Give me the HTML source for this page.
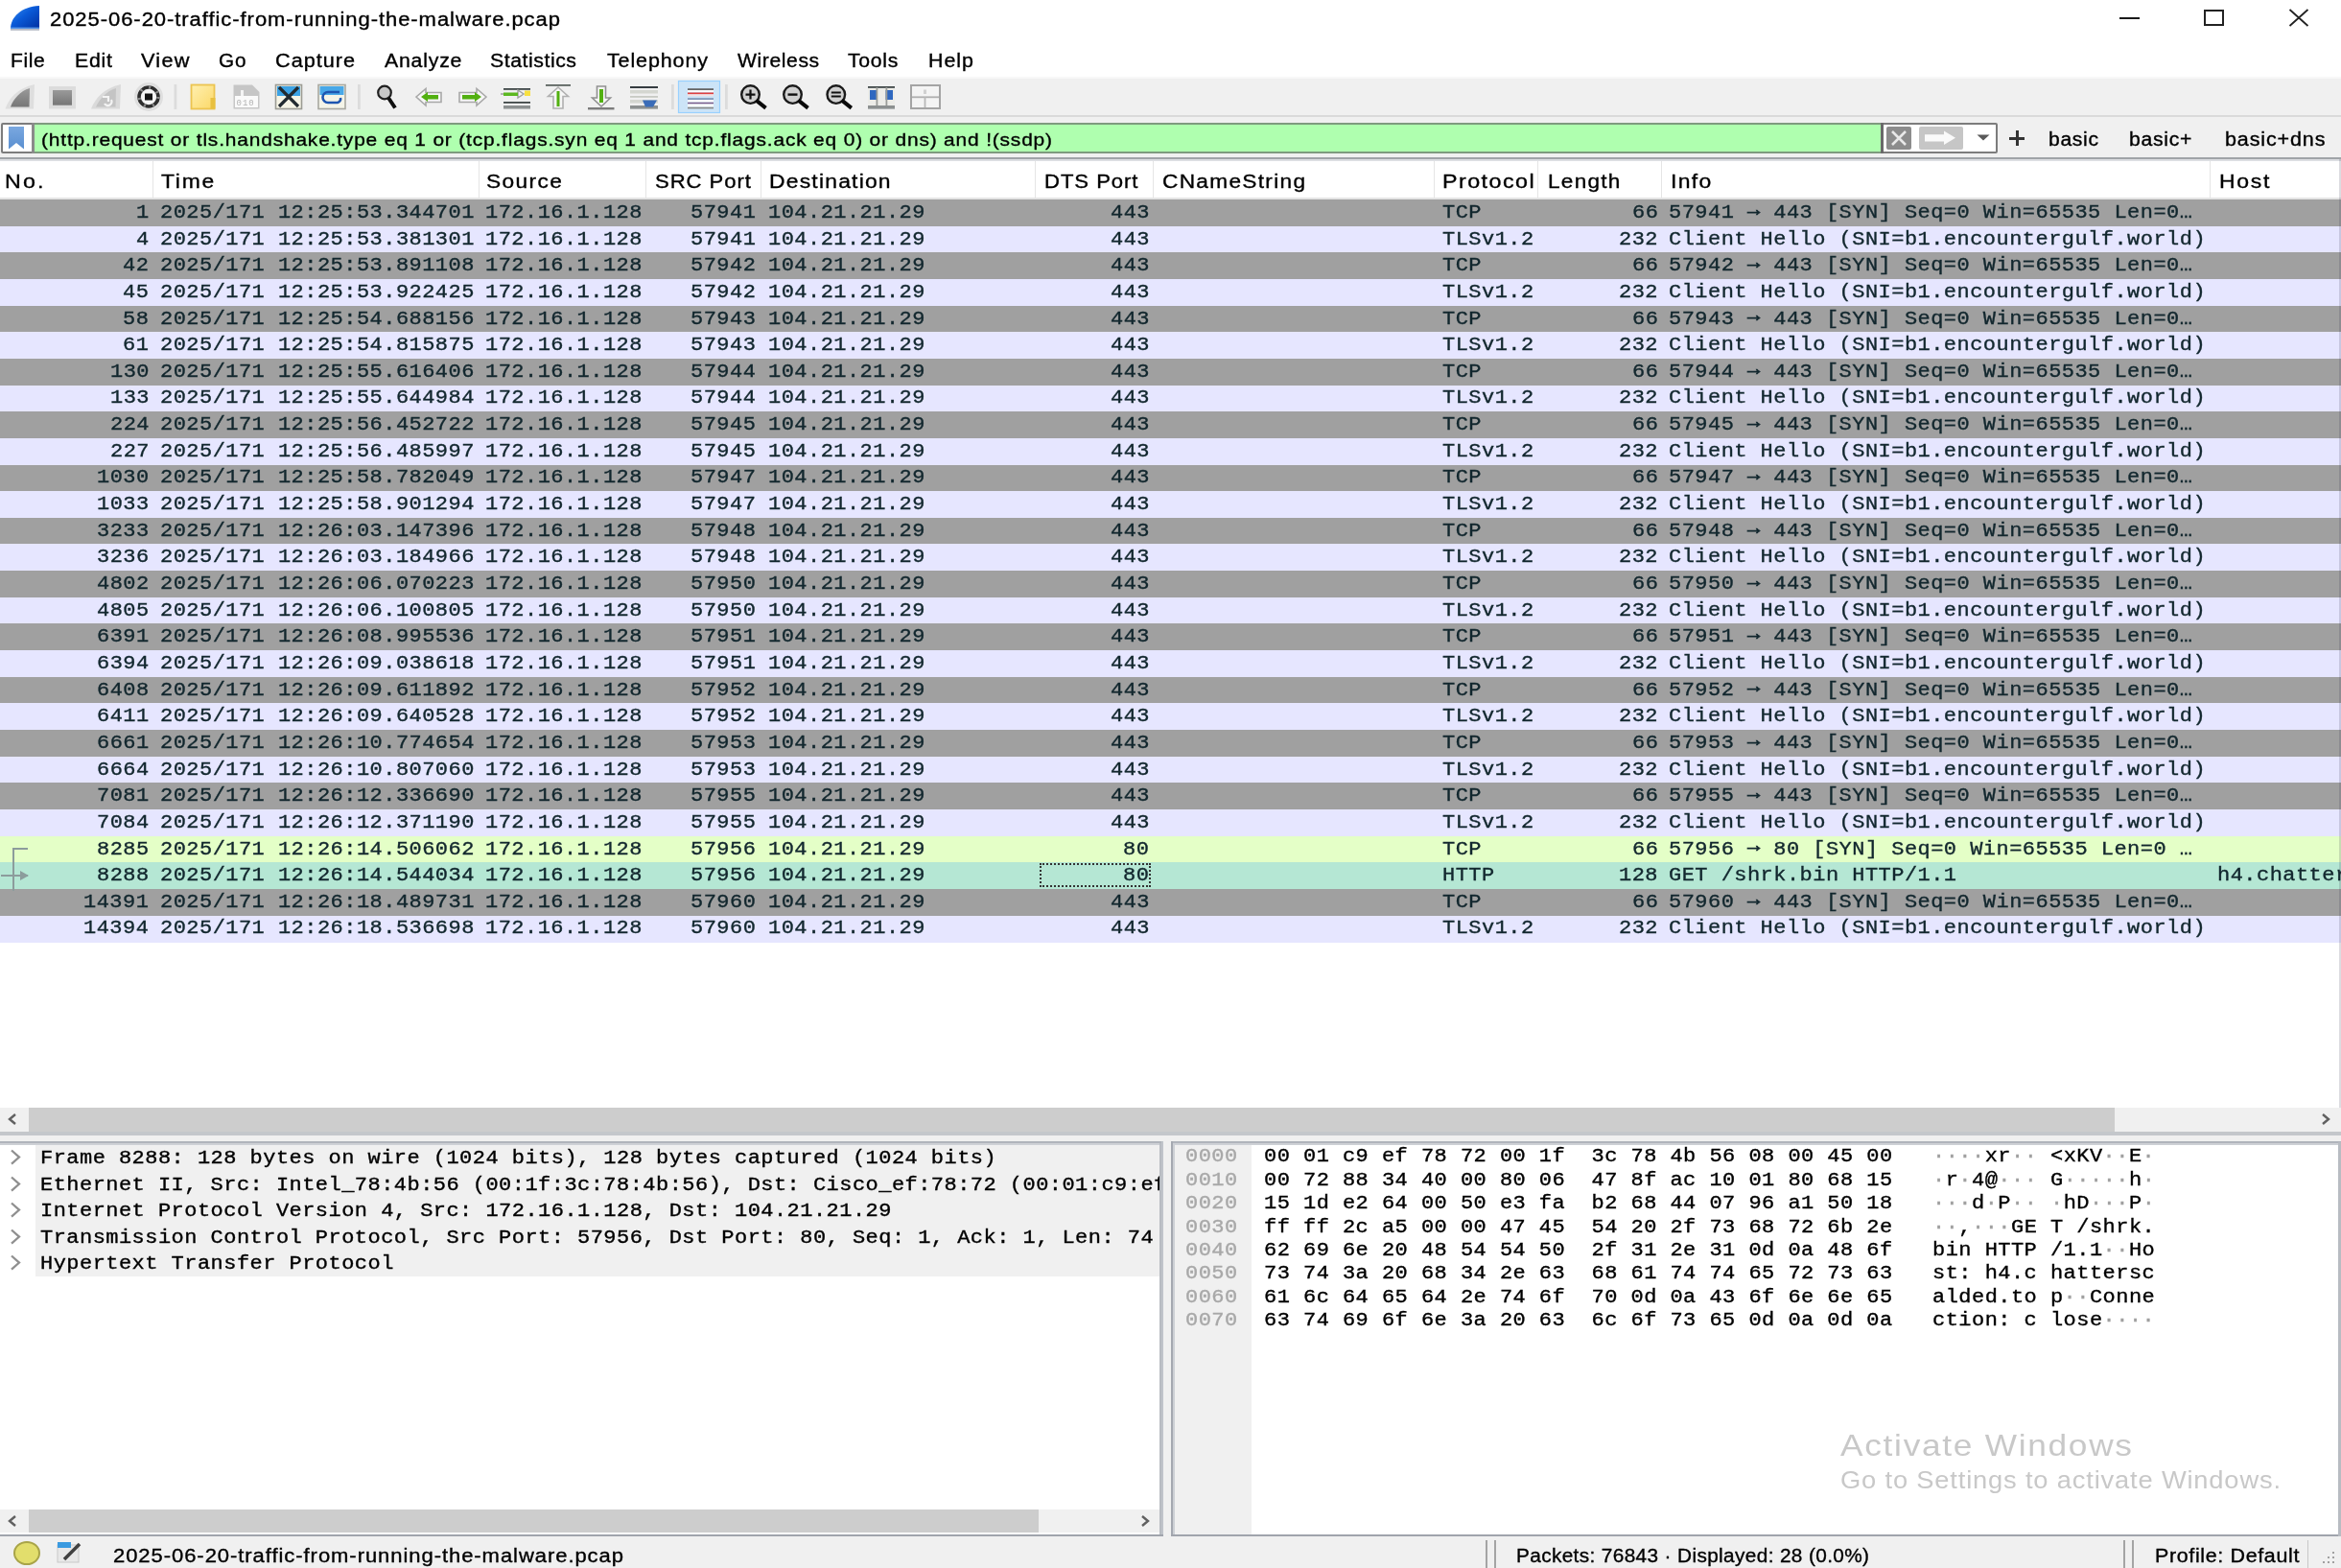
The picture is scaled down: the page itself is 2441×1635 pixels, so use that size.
<!DOCTYPE html>
<html><head><meta charset="utf-8"><title>Wireshark</title>
<style>
html,body{margin:0;padding:0;width:2441px;height:1635px;overflow:hidden;background:#fff;position:relative}
body{filter:blur(0.5px)}
body *{position:absolute;box-sizing:border-box}
svg *{position:static}
.t{white-space:pre;line-height:1;-webkit-text-stroke:0.35px currentColor}
</style></head><body>
<div style="left:0.00px;top:0.00px;width:2441.00px;height:79.00px;background:#ffffff;"></div>
<svg style="left:10.00px;top:4.00px" width="34" height="30" viewBox="0 0 34 30"><defs><linearGradient id="fin" x1="0" y1="0" x2="1" y2="1"><stop offset="0" stop-color="#3a90f0"/><stop offset="0.45" stop-color="#0a5ad8"/><stop offset="1" stop-color="#0030a0"/></linearGradient></defs><path d="M1 26 C1 14 12 3 31 2 L31 26 Z" fill="url(#fin)"/><rect x="1" y="24.5" width="30" height="2" fill="#6aa8f0" opacity="0.8"/><rect x="1" y="26" width="30" height="1.8" fill="#b4b8c4"/></svg>
<div class="t" style="left:52.00px;top:9.50px;font-family:'Liberation Sans';font-size:20px;letter-spacing:0.859px;color:#000;transform:scaleX(1.1002);transform-origin:0 0;">2025-06-20-traffic-from-running-the-malware.pcap</div>
<div style="left:2209.50px;top:18.00px;width:21.00px;height:2.00px;background:#1a1a1a;"></div>
<div style="left:2297.5px;top:10px;width:21px;height:17px;border:2px solid #222"></div>
<svg style="left:2386.00px;top:9.00px" width="22" height="19" viewBox="0 0 22 19"><path d="M1.5 1 L20.5 18 M20.5 1 L1.5 18" stroke="#222" stroke-width="1.8"/></svg>
<div class="t" style="left:11.40px;top:53.00px;font-family:'Liberation Sans';font-size:20px;letter-spacing:0.533px;color:#000;transform:scaleX(1.0522);transform-origin:0 0;">File</div>
<div class="t" style="left:78.00px;top:53.00px;font-family:'Liberation Sans';font-size:20px;letter-spacing:0.694px;color:#000;transform:scaleX(1.0643);transform-origin:0 0;">Edit</div>
<div class="t" style="left:146.60px;top:53.00px;font-family:'Liberation Sans';font-size:20px;letter-spacing:1.136px;color:#000;transform:scaleX(1.0860);transform-origin:0 0;">View</div>
<div class="t" style="left:228.00px;top:53.00px;font-family:'Liberation Sans';font-size:20px;letter-spacing:0.923px;color:#000;transform:scaleX(1.0358);transform-origin:0 0;">Go</div>
<div class="t" style="left:287.00px;top:53.00px;font-family:'Liberation Sans';font-size:20px;letter-spacing:0.911px;color:#000;transform:scaleX(1.0832);transform-origin:0 0;">Capture</div>
<div class="t" style="left:400.80px;top:53.00px;font-family:'Liberation Sans';font-size:20px;letter-spacing:0.723px;color:#000;transform:scaleX(1.0650);transform-origin:0 0;">Analyze</div>
<div class="t" style="left:511.20px;top:53.00px;font-family:'Liberation Sans';font-size:20px;letter-spacing:0.521px;color:#000;transform:scaleX(1.0623);transform-origin:0 0;">Statistics</div>
<div class="t" style="left:633.20px;top:53.00px;font-family:'Liberation Sans';font-size:20px;letter-spacing:0.803px;color:#000;transform:scaleX(1.0757);transform-origin:0 0;">Telephony</div>
<div class="t" style="left:768.80px;top:53.00px;font-family:'Liberation Sans';font-size:20px;letter-spacing:0.571px;color:#000;transform:scaleX(1.0550);transform-origin:0 0;">Wireless</div>
<div class="t" style="left:884.20px;top:53.00px;font-family:'Liberation Sans';font-size:20px;letter-spacing:0.671px;color:#000;transform:scaleX(1.0610);transform-origin:0 0;">Tools</div>
<div class="t" style="left:968.20px;top:53.00px;font-family:'Liberation Sans';font-size:20px;letter-spacing:0.912px;color:#000;transform:scaleX(1.0712);transform-origin:0 0;">Help</div>
<div style="left:0.00px;top:80.00px;width:2441.00px;height:2.00px;background:#f8f8f8;"></div>
<div style="left:0.00px;top:82.00px;width:2441.00px;height:38.00px;background:#f0f0f0;"></div>
<div style="left:0.00px;top:120.00px;width:2441.00px;height:2.00px;background:#dadada;"></div>
<svg style="left:0;top:80px" width="1000" height="42" viewBox="0 80 1000 42"><defs><linearGradient id="g1" x1="0" y1="0" x2="0" y2="1"><stop offset="0" stop-color="#9a9a9a"/><stop offset="1" stop-color="#767676"/></linearGradient><linearGradient id="gy" x1="0" y1="0" x2="1" y2="1"><stop offset="0" stop-color="#fff0b0"/><stop offset="1" stop-color="#fbd868"/></linearGradient></defs><path d="M5.5 113.5 C9 103 18 92 36 88 L35 113.5 Z" fill="#dedede"/><path d="M11 111.5 C14 103 21 95 31 92 L30.5 111.5 Z" fill="url(#g1)"/><rect x="51" y="90" width="28" height="23.5" fill="#dcdcdc"/><rect x="55" y="94" width="20" height="15.7" fill="url(#g1)"/><path d="M95 113.5 C99 103 108 92 126 88 L125 113.5 Z" fill="#dadada"/><path d="M100 111.5 C104 103 111 95 121 92 L120.5 111.5 Z" fill="#c4c4c4"/><path d="M107 101 h6 v5 M116 104 a4 4 0 1 1 -7 4" stroke="#f4f4f4" stroke-width="2.2" fill="none"/><circle cx="155" cy="101" r="15" fill="#dedede"/><circle cx="155" cy="101" r="12.2" fill="#f2f2f2"/><circle cx="155" cy="101" r="10" fill="none" stroke="#2e2e2e" stroke-width="3.6"/><circle cx="155" cy="101" r="10" fill="none" stroke="#8a8a8a" stroke-width="3.6" stroke-dasharray="2 7.4"/><circle cx="155" cy="101" r="6.8" fill="#f6f6f6"/><rect x="151" y="97.5" width="8" height="7" fill="#141414"/><rect x="181.5" y="88" width="2.8" height="26" fill="#dcdcdc"/><rect x="373" y="88" width="2.8" height="26" fill="#dcdcdc"/><rect x="700" y="88" width="2.8" height="26" fill="#dcdcdc"/><rect x="756" y="88" width="2.8" height="26" fill="#dcdcdc"/><rect x="199.5" y="88.5" width="24" height="25" fill="url(#gy)" stroke="#ecc450" stroke-width="1.8"/><rect x="219.5" y="102" width="5" height="11.5" fill="#e8c040"/><path d="M243.5 88.5 H263 L270.5 96 V113.5 H243.5 Z" fill="#c6c6c6"/><rect x="245" y="100" width="24" height="12" fill="#fafafa"/><rect x="251" y="94" width="3" height="6" fill="#f4f4f4"/><text x="246.5" y="110" font-family="Liberation Mono" font-size="9" fill="#b4b4b4" letter-spacing="1">010</text><rect x="287.5" y="88.5" width="27" height="25" fill="#f6f4e6" stroke="#9c9c94" stroke-width="1.6"/><rect x="289" y="90" width="24" height="10" fill="#3ca2e4"/><path d="M291 91 L311 111 M311 91 L291 111" stroke="#222a30" stroke-width="3.2"/><rect x="332" y="88.5" width="28" height="25" fill="#f4f4e8" stroke="#a8a8a0" stroke-width="1.6"/><rect x="333.5" y="90" width="25" height="9" fill="#48a8e8"/><path d="M354 96 H342 a5 5 0 0 0 0 11 H352 a4 4 0 0 0 3 -5" stroke="#1e56b0" stroke-width="2.6" fill="none"/><circle cx="401" cy="96.5" r="6.8" fill="#c8c8c8" stroke="#202020" stroke-width="2.2"/><path d="M405 102 L412 112.5" stroke="#101010" stroke-width="4"/><path d="M434 101 L444 92.5 V96.5 H460 V106.5 H444 V110 Z" fill="#f6f6f6" stroke="#a8a8a8" stroke-width="1.6"/><path d="M439 101 L446 96 V99 H457 V103.5 H446 V106 Z" fill="#52b010"/><path d="M507 101 L497 92.5 V96.5 H479 V106.5 H497 V110 Z" fill="#f6f6f6" stroke="#a8a8a8" stroke-width="1.6"/><path d="M502 101 L495 96 V99 H482 V103.5 H495 V106 Z" fill="#52b010"/><rect x="525" y="92" width="28" height="1.8" fill="#404848"/><path d="M522 98 H540 V94 L546 98 L540 102 V98" fill="#f4f4f4" stroke="#a0a0a0" stroke-width="1.4"/><rect x="525" y="96.5" width="15" height="3.5" fill="#5cb820"/><rect x="547" y="94.5" width="6" height="5.5" fill="#f8e040"/><rect x="525" y="106" width="28" height="1.8" fill="#404848"/><rect x="525" y="110" width="28" height="3.5" fill="#8c9090"/><rect x="569" y="88" width="26" height="1.8" fill="#5c6460"/><path d="M582 91 L592.5 100.5 H587 V113 H577 V100.5 H571.5 Z" fill="#f6f6f6" stroke="#b0b0b0" stroke-width="1.6"/><rect x="580.5" y="95" width="3" height="16" fill="#52b010"/><path d="M622.5 90 H631.5 V102 H636.5 L627 111 L617.5 102 H622.5 Z" fill="#f6f6f6" stroke="#909090" stroke-width="1.6"/><rect x="625" y="93" width="4" height="14" fill="#52b010"/><rect x="613" y="112" width="27.5" height="2.4" fill="#7c7c7c"/><rect x="657" y="90" width="29" height="2" fill="#353c40"/><rect x="657" y="94" width="29" height="3.5" fill="#d4d6d0"/><rect x="657" y="100" width="29" height="1.8" fill="#c8cac4"/><rect x="657" y="104" width="29" height="3.5" fill="#d4d6d0"/><rect x="657" y="110" width="29" height="3.6" fill="#8c9090"/><path d="M670 104.5 H685 L681 111.5 H673 Z" fill="#3a6cb8"/><rect x="707.5" y="84.5" width="43" height="33" fill="#cce4f7" stroke="#99d1ff" stroke-width="1.2"/><rect x="717" y="92.2" width="27" height="1.8" fill="#666"/><rect x="717" y="96.5" width="27" height="1.8" fill="#e04040"/><rect x="717" y="102.2" width="27" height="1.8" fill="#8098b8"/><rect x="717" y="106.6" width="27" height="1.8" fill="#7a5a8a"/><rect x="717" y="111.6" width="27" height="1.8" fill="#8a8a8a"/><rect x="717" y="94" width="27" height="2" fill="#fafafa"/><rect x="717" y="98.4" width="27" height="1.8" fill="#f8e0e0"/><rect x="717" y="104" width="27" height="2.4" fill="#fafafa"/><rect x="717" y="108.5" width="27" height="2.8" fill="#fafafa"/><circle cx="782.5" cy="98.6" r="9.3" fill="#d0d0d0" stroke="#1a1a1a" stroke-width="2.4"/><path d="M788.5 104.6 L798.5 112.6" stroke="#0a0a0a" stroke-width="4"/><path d="M777.5 98.6 H787.5 M782.5 93.6 V103.6" stroke="#101010" stroke-width="2.2"/><circle cx="826.5" cy="98.6" r="9.3" fill="#d0d0d0" stroke="#1a1a1a" stroke-width="2.4"/><path d="M832.5 104.6 L842.5 112.6" stroke="#0a0a0a" stroke-width="4"/><path d="M821.5 98.6 H831.5" stroke="#101010" stroke-width="2.4"/><circle cx="871.8" cy="98.6" r="9.3" fill="#d0d0d0" stroke="#1a1a1a" stroke-width="2.4"/><path d="M877.8 104.6 L887.8 112.6" stroke="#0a0a0a" stroke-width="4"/><path d="M866.8 96.6 H876.8 M866.8 100.6 H876.8" stroke="#101010" stroke-width="2"/><rect x="905" y="90" width="28" height="1.8" fill="#404848"/><rect x="905" y="92" width="28" height="18" fill="#ecece8"/><rect x="907" y="94" width="7.5" height="10" fill="#2f68c0"/><rect x="923.5" y="94" width="7.5" height="10" fill="#2f68c0"/><rect x="913.5" y="91" width="1.8" height="21" fill="#9a9c98"/><rect x="923.5" y="91" width="1.8" height="21" fill="#9a9c98"/><rect x="905" y="110" width="28" height="3.6" fill="#8c9090"/><rect x="950" y="89" width="30" height="24" fill="#f4f4f4" stroke="#a4a4a4" stroke-width="2"/><rect x="951" y="100.4" width="28" height="1.8" fill="#b0b0b0"/><rect x="963.6" y="101" width="1.8" height="11" fill="#b8b8b8"/><rect x="963" y="93.5" width="3" height="4.5" fill="#d0d0d0"/></svg>
<div style="left:0.00px;top:122.00px;width:2441.00px;height:42.00px;background:#f0f0f0;"></div>
<div style="left:0.00px;top:164.00px;width:2441.00px;height:2.00px;background:#a0a4a8;"></div>
<div style="left:1px;top:128px;width:2082px;height:31.7px;border:2px solid #7c7c7c;border-radius:2px;background:#fff"></div>
<div style="left:35.00px;top:130.00px;width:1926.00px;height:28.00px;background:#afffaf;"></div>
<div style="left:33.00px;top:128.00px;width:3.00px;height:32.00px;background:#8a8a8a;"></div>
<svg style="left:8.00px;top:131.00px" width="18" height="26" viewBox="0 0 18 26"><defs><linearGradient id="bm" x1="0" y1="0" x2="0" y2="1"><stop offset="0" stop-color="#7aa8e0"/><stop offset="1" stop-color="#5a8fd0"/></linearGradient></defs><path d="M1 1 H17 V24.5 L9 18 L1 24.5 Z" fill="url(#bm)"/></svg>
<div style="left:36.00px;top:128.00px;width:1925.00px;height:2.00px;background:#7e9a7e;"></div>
<div style="left:36.00px;top:157.70px;width:1925.00px;height:2.00px;background:#7e9a7e;"></div>
<div style="left:1961.00px;top:128.00px;width:2.50px;height:32.00px;background:#6a6a6a;"></div>
<div class="t" style="left:43.00px;top:136.25px;font-family:'Liberation Sans';font-size:19px;letter-spacing:0.756px;color:#000;transform:scaleX(1.1005);transform-origin:0 0;">(http.request or tls.handshake.type eq 1 or (tcp.flags.syn eq 1 and tcp.flags.ack eq 0) or dns) and !(ssdp)</div>
<div style="left:1967px;top:132px;width:26px;height:23.5px;background:#8c8c8c;border-radius:2px"></div>
<svg style="left:1967.00px;top:132.00px" width="26" height="24" viewBox="0 0 26 24"><path d="M6 5 L20 19 M20 5 L6 19" stroke="#e8e8e8" stroke-width="2.6"/></svg>
<div style="left:2001px;top:132px;width:45.6px;height:23.5px;background:#c6c6c6;border-radius:2px"></div>
<svg style="left:2001.00px;top:132.00px" width="46" height="24" viewBox="0 0 46 24"><path d="M6 8.2 H26 V4.5 L38 11.8 L26 19 V15.4 H6 Z" fill="#fafafa"/></svg>
<svg style="left:2060.00px;top:139.00px" width="16" height="10" viewBox="0 0 16 10"><path d="M1.5 1.5 H14.5 L8 7.5 Z" fill="#5a5a5a"/></svg>
<div style="left:2095.00px;top:142.50px;width:16.00px;height:3.00px;background:#333;"></div>
<div style="left:2101.50px;top:136.00px;width:3.00px;height:16.00px;background:#333;"></div>
<div class="t" style="left:2136.00px;top:134.50px;font-family:'Liberation Sans';font-size:20px;letter-spacing:0.627px;color:#000;transform:scaleX(1.0567);transform-origin:0 0;">basic</div>
<div class="t" style="left:2220.00px;top:134.50px;font-family:'Liberation Sans';font-size:20px;letter-spacing:0.672px;color:#000;transform:scaleX(1.0610);transform-origin:0 0;">basic+</div>
<div class="t" style="left:2319.60px;top:134.50px;font-family:'Liberation Sans';font-size:20px;letter-spacing:0.800px;color:#000;transform:scaleX(1.0760);transform-origin:0 0;">basic+dns</div>
<div style="left:0.00px;top:166.00px;width:2441.00px;height:41.00px;background:#ffffff;"></div>
<div style="left:0.00px;top:166.00px;width:2441.00px;height:2.00px;background:#dcdee2;"></div>
<div style="left:0.00px;top:206.00px;width:2441.00px;height:2.00px;background:#e4e4e4;"></div>
<div style="left:159.20px;top:168.00px;width:1.20px;height:38.00px;background:#e5e5e5;"></div>
<div style="left:498.50px;top:168.00px;width:1.20px;height:38.00px;background:#e5e5e5;"></div>
<div style="left:673.10px;top:168.00px;width:1.20px;height:38.00px;background:#e5e5e5;"></div>
<div style="left:793.00px;top:168.00px;width:1.20px;height:38.00px;background:#e5e5e5;"></div>
<div style="left:1079.20px;top:168.00px;width:1.20px;height:38.00px;background:#e5e5e5;"></div>
<div style="left:1202.10px;top:168.00px;width:1.20px;height:38.00px;background:#e5e5e5;"></div>
<div style="left:1495.00px;top:168.00px;width:1.20px;height:38.00px;background:#e5e5e5;"></div>
<div style="left:1602.50px;top:168.00px;width:1.20px;height:38.00px;background:#e5e5e5;"></div>
<div style="left:1731.50px;top:168.00px;width:1.20px;height:38.00px;background:#e5e5e5;"></div>
<div style="left:2303.90px;top:168.00px;width:1.20px;height:38.00px;background:#e5e5e5;"></div>
<div class="t" style="left:5.40px;top:178.57px;font-family:'Liberation Sans';font-size:20.5px;letter-spacing:1.893px;color:#000;transform:scaleX(1.1347);transform-origin:0 0;">No.</div>
<div class="t" style="left:168.00px;top:178.57px;font-family:'Liberation Sans';font-size:20.5px;letter-spacing:1.553px;color:#000;transform:scaleX(1.1161);transform-origin:0 0;">Time</div>
<div class="t" style="left:506.60px;top:178.57px;font-family:'Liberation Sans';font-size:20.5px;letter-spacing:1.266px;color:#000;transform:scaleX(1.1080);transform-origin:0 0;">Source</div>
<div class="t" style="left:682.90px;top:178.57px;font-family:'Liberation Sans';font-size:20.5px;letter-spacing:0.890px;color:#000;transform:scaleX(1.0775);transform-origin:0 0;">SRC Port</div>
<div class="t" style="left:801.60px;top:178.57px;font-family:'Liberation Sans';font-size:20.5px;letter-spacing:1.076px;color:#000;transform:scaleX(1.1172);transform-origin:0 0;">Destination</div>
<div class="t" style="left:1089.00px;top:178.57px;font-family:'Liberation Sans';font-size:20.5px;letter-spacing:0.875px;color:#000;transform:scaleX(1.0783);transform-origin:0 0;">DTS Port</div>
<div class="t" style="left:1212.20px;top:178.57px;font-family:'Liberation Sans';font-size:20.5px;letter-spacing:1.174px;color:#000;transform:scaleX(1.1055);transform-origin:0 0;">CNameString</div>
<div class="t" style="left:1503.70px;top:178.57px;font-family:'Liberation Sans';font-size:20.5px;letter-spacing:1.282px;color:#000;transform:scaleX(1.1355);transform-origin:0 0;">Protocol</div>
<div class="t" style="left:1613.90px;top:178.57px;font-family:'Liberation Sans';font-size:20.5px;letter-spacing:1.153px;color:#000;transform:scaleX(1.1012);transform-origin:0 0;">Length</div>
<div class="t" style="left:1741.60px;top:178.57px;font-family:'Liberation Sans';font-size:20.5px;letter-spacing:1.207px;color:#000;transform:scaleX(1.1184);transform-origin:0 0;">Info</div>
<div class="t" style="left:2313.50px;top:178.57px;font-family:'Liberation Sans';font-size:20.5px;letter-spacing:1.536px;color:#000;transform:scaleX(1.1227);transform-origin:0 0;">Host</div>
<div style="left:0.00px;top:208.00px;width:2441.00px;height:28.05px;background:#a0a0a0;"></div>
<div class="t" style="left:141.84px;top:211.90px;font-family:'Liberation Mono';font-size:20.0px;letter-spacing:0.416px;color:#12272e;transform:scaleX(1.1);transform-origin:0 0;">1</div>
<div class="t" style="left:167.00px;top:211.90px;font-family:'Liberation Mono';font-size:20.0px;letter-spacing:0.416px;color:#12272e;transform:scaleX(1.1);transform-origin:0 0;">2025/171 12:25:53.344701</div>
<div class="t" style="left:505.50px;top:211.90px;font-family:'Liberation Mono';font-size:20.0px;letter-spacing:0.416px;color:#12272e;transform:scaleX(1.1);transform-origin:0 0;">172.16.1.128</div>
<div class="t" style="left:719.70px;top:211.90px;font-family:'Liberation Mono';font-size:20.0px;letter-spacing:0.416px;color:#12272e;transform:scaleX(1.1);transform-origin:0 0;">57941</div>
<div class="t" style="left:800.50px;top:211.90px;font-family:'Liberation Mono';font-size:20.0px;letter-spacing:0.416px;color:#12272e;transform:scaleX(1.1);transform-origin:0 0;">104.21.21.29</div>
<div class="t" style="left:1157.52px;top:211.90px;font-family:'Liberation Mono';font-size:20.0px;letter-spacing:0.416px;color:#12272e;transform:scaleX(1.1);transform-origin:0 0;">443</div>
<div class="t" style="left:1503.50px;top:211.90px;font-family:'Liberation Mono';font-size:20.0px;letter-spacing:0.416px;color:#12272e;transform:scaleX(1.1);transform-origin:0 0;">TCP</div>
<div class="t" style="left:1701.68px;top:211.90px;font-family:'Liberation Mono';font-size:20.0px;letter-spacing:0.416px;color:#12272e;transform:scaleX(1.1);transform-origin:0 0;">66</div>
<div class="t" style="left:1739.50px;top:211.90px;font-family:'Liberation Mono';font-size:20.0px;letter-spacing:0.416px;color:#12272e;transform:scaleX(1.1);transform-origin:0 0;">57941 <span style="position:relative;top:-2.2px;-webkit-text-stroke:0.8px currentColor">→</span> 443 [SYN] Seq=0 Win=65535 Len=0…</div>
<div style="left:0.00px;top:235.65px;width:2441.00px;height:28.05px;background:#e6e6ff;"></div>
<div class="t" style="left:141.84px;top:239.55px;font-family:'Liberation Mono';font-size:20.0px;letter-spacing:0.416px;color:#12272e;transform:scaleX(1.1);transform-origin:0 0;">4</div>
<div class="t" style="left:167.00px;top:239.55px;font-family:'Liberation Mono';font-size:20.0px;letter-spacing:0.416px;color:#12272e;transform:scaleX(1.1);transform-origin:0 0;">2025/171 12:25:53.381301</div>
<div class="t" style="left:505.50px;top:239.55px;font-family:'Liberation Mono';font-size:20.0px;letter-spacing:0.416px;color:#12272e;transform:scaleX(1.1);transform-origin:0 0;">172.16.1.128</div>
<div class="t" style="left:719.70px;top:239.55px;font-family:'Liberation Mono';font-size:20.0px;letter-spacing:0.416px;color:#12272e;transform:scaleX(1.1);transform-origin:0 0;">57941</div>
<div class="t" style="left:800.50px;top:239.55px;font-family:'Liberation Mono';font-size:20.0px;letter-spacing:0.416px;color:#12272e;transform:scaleX(1.1);transform-origin:0 0;">104.21.21.29</div>
<div class="t" style="left:1157.52px;top:239.55px;font-family:'Liberation Mono';font-size:20.0px;letter-spacing:0.416px;color:#12272e;transform:scaleX(1.1);transform-origin:0 0;">443</div>
<div class="t" style="left:1503.50px;top:239.55px;font-family:'Liberation Mono';font-size:20.0px;letter-spacing:0.416px;color:#12272e;transform:scaleX(1.1);transform-origin:0 0;">TLSv1.2</div>
<div class="t" style="left:1688.02px;top:239.55px;font-family:'Liberation Mono';font-size:20.0px;letter-spacing:0.416px;color:#12272e;transform:scaleX(1.1);transform-origin:0 0;">232</div>
<div class="t" style="left:1739.50px;top:239.55px;font-family:'Liberation Mono';font-size:20.0px;letter-spacing:0.416px;color:#12272e;transform:scaleX(1.1);transform-origin:0 0;">Client Hello (SNI=b1.encountergulf.world)</div>
<div style="left:0.00px;top:263.30px;width:2441.00px;height:28.05px;background:#a0a0a0;"></div>
<div class="t" style="left:128.18px;top:267.20px;font-family:'Liberation Mono';font-size:20.0px;letter-spacing:0.416px;color:#12272e;transform:scaleX(1.1);transform-origin:0 0;">42</div>
<div class="t" style="left:167.00px;top:267.20px;font-family:'Liberation Mono';font-size:20.0px;letter-spacing:0.416px;color:#12272e;transform:scaleX(1.1);transform-origin:0 0;">2025/171 12:25:53.891108</div>
<div class="t" style="left:505.50px;top:267.20px;font-family:'Liberation Mono';font-size:20.0px;letter-spacing:0.416px;color:#12272e;transform:scaleX(1.1);transform-origin:0 0;">172.16.1.128</div>
<div class="t" style="left:719.70px;top:267.20px;font-family:'Liberation Mono';font-size:20.0px;letter-spacing:0.416px;color:#12272e;transform:scaleX(1.1);transform-origin:0 0;">57942</div>
<div class="t" style="left:800.50px;top:267.20px;font-family:'Liberation Mono';font-size:20.0px;letter-spacing:0.416px;color:#12272e;transform:scaleX(1.1);transform-origin:0 0;">104.21.21.29</div>
<div class="t" style="left:1157.52px;top:267.20px;font-family:'Liberation Mono';font-size:20.0px;letter-spacing:0.416px;color:#12272e;transform:scaleX(1.1);transform-origin:0 0;">443</div>
<div class="t" style="left:1503.50px;top:267.20px;font-family:'Liberation Mono';font-size:20.0px;letter-spacing:0.416px;color:#12272e;transform:scaleX(1.1);transform-origin:0 0;">TCP</div>
<div class="t" style="left:1701.68px;top:267.20px;font-family:'Liberation Mono';font-size:20.0px;letter-spacing:0.416px;color:#12272e;transform:scaleX(1.1);transform-origin:0 0;">66</div>
<div class="t" style="left:1739.50px;top:267.20px;font-family:'Liberation Mono';font-size:20.0px;letter-spacing:0.416px;color:#12272e;transform:scaleX(1.1);transform-origin:0 0;">57942 <span style="position:relative;top:-2.2px;-webkit-text-stroke:0.8px currentColor">→</span> 443 [SYN] Seq=0 Win=65535 Len=0…</div>
<div style="left:0.00px;top:290.95px;width:2441.00px;height:28.05px;background:#e6e6ff;"></div>
<div class="t" style="left:128.18px;top:294.85px;font-family:'Liberation Mono';font-size:20.0px;letter-spacing:0.416px;color:#12272e;transform:scaleX(1.1);transform-origin:0 0;">45</div>
<div class="t" style="left:167.00px;top:294.85px;font-family:'Liberation Mono';font-size:20.0px;letter-spacing:0.416px;color:#12272e;transform:scaleX(1.1);transform-origin:0 0;">2025/171 12:25:53.922425</div>
<div class="t" style="left:505.50px;top:294.85px;font-family:'Liberation Mono';font-size:20.0px;letter-spacing:0.416px;color:#12272e;transform:scaleX(1.1);transform-origin:0 0;">172.16.1.128</div>
<div class="t" style="left:719.70px;top:294.85px;font-family:'Liberation Mono';font-size:20.0px;letter-spacing:0.416px;color:#12272e;transform:scaleX(1.1);transform-origin:0 0;">57942</div>
<div class="t" style="left:800.50px;top:294.85px;font-family:'Liberation Mono';font-size:20.0px;letter-spacing:0.416px;color:#12272e;transform:scaleX(1.1);transform-origin:0 0;">104.21.21.29</div>
<div class="t" style="left:1157.52px;top:294.85px;font-family:'Liberation Mono';font-size:20.0px;letter-spacing:0.416px;color:#12272e;transform:scaleX(1.1);transform-origin:0 0;">443</div>
<div class="t" style="left:1503.50px;top:294.85px;font-family:'Liberation Mono';font-size:20.0px;letter-spacing:0.416px;color:#12272e;transform:scaleX(1.1);transform-origin:0 0;">TLSv1.2</div>
<div class="t" style="left:1688.02px;top:294.85px;font-family:'Liberation Mono';font-size:20.0px;letter-spacing:0.416px;color:#12272e;transform:scaleX(1.1);transform-origin:0 0;">232</div>
<div class="t" style="left:1739.50px;top:294.85px;font-family:'Liberation Mono';font-size:20.0px;letter-spacing:0.416px;color:#12272e;transform:scaleX(1.1);transform-origin:0 0;">Client Hello (SNI=b1.encountergulf.world)</div>
<div style="left:0.00px;top:318.60px;width:2441.00px;height:28.05px;background:#a0a0a0;"></div>
<div class="t" style="left:128.18px;top:322.50px;font-family:'Liberation Mono';font-size:20.0px;letter-spacing:0.416px;color:#12272e;transform:scaleX(1.1);transform-origin:0 0;">58</div>
<div class="t" style="left:167.00px;top:322.50px;font-family:'Liberation Mono';font-size:20.0px;letter-spacing:0.416px;color:#12272e;transform:scaleX(1.1);transform-origin:0 0;">2025/171 12:25:54.688156</div>
<div class="t" style="left:505.50px;top:322.50px;font-family:'Liberation Mono';font-size:20.0px;letter-spacing:0.416px;color:#12272e;transform:scaleX(1.1);transform-origin:0 0;">172.16.1.128</div>
<div class="t" style="left:719.70px;top:322.50px;font-family:'Liberation Mono';font-size:20.0px;letter-spacing:0.416px;color:#12272e;transform:scaleX(1.1);transform-origin:0 0;">57943</div>
<div class="t" style="left:800.50px;top:322.50px;font-family:'Liberation Mono';font-size:20.0px;letter-spacing:0.416px;color:#12272e;transform:scaleX(1.1);transform-origin:0 0;">104.21.21.29</div>
<div class="t" style="left:1157.52px;top:322.50px;font-family:'Liberation Mono';font-size:20.0px;letter-spacing:0.416px;color:#12272e;transform:scaleX(1.1);transform-origin:0 0;">443</div>
<div class="t" style="left:1503.50px;top:322.50px;font-family:'Liberation Mono';font-size:20.0px;letter-spacing:0.416px;color:#12272e;transform:scaleX(1.1);transform-origin:0 0;">TCP</div>
<div class="t" style="left:1701.68px;top:322.50px;font-family:'Liberation Mono';font-size:20.0px;letter-spacing:0.416px;color:#12272e;transform:scaleX(1.1);transform-origin:0 0;">66</div>
<div class="t" style="left:1739.50px;top:322.50px;font-family:'Liberation Mono';font-size:20.0px;letter-spacing:0.416px;color:#12272e;transform:scaleX(1.1);transform-origin:0 0;">57943 <span style="position:relative;top:-2.2px;-webkit-text-stroke:0.8px currentColor">→</span> 443 [SYN] Seq=0 Win=65535 Len=0…</div>
<div style="left:0.00px;top:346.25px;width:2441.00px;height:28.05px;background:#e6e6ff;"></div>
<div class="t" style="left:128.18px;top:350.15px;font-family:'Liberation Mono';font-size:20.0px;letter-spacing:0.416px;color:#12272e;transform:scaleX(1.1);transform-origin:0 0;">61</div>
<div class="t" style="left:167.00px;top:350.15px;font-family:'Liberation Mono';font-size:20.0px;letter-spacing:0.416px;color:#12272e;transform:scaleX(1.1);transform-origin:0 0;">2025/171 12:25:54.815875</div>
<div class="t" style="left:505.50px;top:350.15px;font-family:'Liberation Mono';font-size:20.0px;letter-spacing:0.416px;color:#12272e;transform:scaleX(1.1);transform-origin:0 0;">172.16.1.128</div>
<div class="t" style="left:719.70px;top:350.15px;font-family:'Liberation Mono';font-size:20.0px;letter-spacing:0.416px;color:#12272e;transform:scaleX(1.1);transform-origin:0 0;">57943</div>
<div class="t" style="left:800.50px;top:350.15px;font-family:'Liberation Mono';font-size:20.0px;letter-spacing:0.416px;color:#12272e;transform:scaleX(1.1);transform-origin:0 0;">104.21.21.29</div>
<div class="t" style="left:1157.52px;top:350.15px;font-family:'Liberation Mono';font-size:20.0px;letter-spacing:0.416px;color:#12272e;transform:scaleX(1.1);transform-origin:0 0;">443</div>
<div class="t" style="left:1503.50px;top:350.15px;font-family:'Liberation Mono';font-size:20.0px;letter-spacing:0.416px;color:#12272e;transform:scaleX(1.1);transform-origin:0 0;">TLSv1.2</div>
<div class="t" style="left:1688.02px;top:350.15px;font-family:'Liberation Mono';font-size:20.0px;letter-spacing:0.416px;color:#12272e;transform:scaleX(1.1);transform-origin:0 0;">232</div>
<div class="t" style="left:1739.50px;top:350.15px;font-family:'Liberation Mono';font-size:20.0px;letter-spacing:0.416px;color:#12272e;transform:scaleX(1.1);transform-origin:0 0;">Client Hello (SNI=b1.encountergulf.world)</div>
<div style="left:0.00px;top:373.90px;width:2441.00px;height:28.05px;background:#a0a0a0;"></div>
<div class="t" style="left:114.52px;top:377.80px;font-family:'Liberation Mono';font-size:20.0px;letter-spacing:0.416px;color:#12272e;transform:scaleX(1.1);transform-origin:0 0;">130</div>
<div class="t" style="left:167.00px;top:377.80px;font-family:'Liberation Mono';font-size:20.0px;letter-spacing:0.416px;color:#12272e;transform:scaleX(1.1);transform-origin:0 0;">2025/171 12:25:55.616406</div>
<div class="t" style="left:505.50px;top:377.80px;font-family:'Liberation Mono';font-size:20.0px;letter-spacing:0.416px;color:#12272e;transform:scaleX(1.1);transform-origin:0 0;">172.16.1.128</div>
<div class="t" style="left:719.70px;top:377.80px;font-family:'Liberation Mono';font-size:20.0px;letter-spacing:0.416px;color:#12272e;transform:scaleX(1.1);transform-origin:0 0;">57944</div>
<div class="t" style="left:800.50px;top:377.80px;font-family:'Liberation Mono';font-size:20.0px;letter-spacing:0.416px;color:#12272e;transform:scaleX(1.1);transform-origin:0 0;">104.21.21.29</div>
<div class="t" style="left:1157.52px;top:377.80px;font-family:'Liberation Mono';font-size:20.0px;letter-spacing:0.416px;color:#12272e;transform:scaleX(1.1);transform-origin:0 0;">443</div>
<div class="t" style="left:1503.50px;top:377.80px;font-family:'Liberation Mono';font-size:20.0px;letter-spacing:0.416px;color:#12272e;transform:scaleX(1.1);transform-origin:0 0;">TCP</div>
<div class="t" style="left:1701.68px;top:377.80px;font-family:'Liberation Mono';font-size:20.0px;letter-spacing:0.416px;color:#12272e;transform:scaleX(1.1);transform-origin:0 0;">66</div>
<div class="t" style="left:1739.50px;top:377.80px;font-family:'Liberation Mono';font-size:20.0px;letter-spacing:0.416px;color:#12272e;transform:scaleX(1.1);transform-origin:0 0;">57944 <span style="position:relative;top:-2.2px;-webkit-text-stroke:0.8px currentColor">→</span> 443 [SYN] Seq=0 Win=65535 Len=0…</div>
<div style="left:0.00px;top:401.55px;width:2441.00px;height:28.05px;background:#e6e6ff;"></div>
<div class="t" style="left:114.52px;top:405.45px;font-family:'Liberation Mono';font-size:20.0px;letter-spacing:0.416px;color:#12272e;transform:scaleX(1.1);transform-origin:0 0;">133</div>
<div class="t" style="left:167.00px;top:405.45px;font-family:'Liberation Mono';font-size:20.0px;letter-spacing:0.416px;color:#12272e;transform:scaleX(1.1);transform-origin:0 0;">2025/171 12:25:55.644984</div>
<div class="t" style="left:505.50px;top:405.45px;font-family:'Liberation Mono';font-size:20.0px;letter-spacing:0.416px;color:#12272e;transform:scaleX(1.1);transform-origin:0 0;">172.16.1.128</div>
<div class="t" style="left:719.70px;top:405.45px;font-family:'Liberation Mono';font-size:20.0px;letter-spacing:0.416px;color:#12272e;transform:scaleX(1.1);transform-origin:0 0;">57944</div>
<div class="t" style="left:800.50px;top:405.45px;font-family:'Liberation Mono';font-size:20.0px;letter-spacing:0.416px;color:#12272e;transform:scaleX(1.1);transform-origin:0 0;">104.21.21.29</div>
<div class="t" style="left:1157.52px;top:405.45px;font-family:'Liberation Mono';font-size:20.0px;letter-spacing:0.416px;color:#12272e;transform:scaleX(1.1);transform-origin:0 0;">443</div>
<div class="t" style="left:1503.50px;top:405.45px;font-family:'Liberation Mono';font-size:20.0px;letter-spacing:0.416px;color:#12272e;transform:scaleX(1.1);transform-origin:0 0;">TLSv1.2</div>
<div class="t" style="left:1688.02px;top:405.45px;font-family:'Liberation Mono';font-size:20.0px;letter-spacing:0.416px;color:#12272e;transform:scaleX(1.1);transform-origin:0 0;">232</div>
<div class="t" style="left:1739.50px;top:405.45px;font-family:'Liberation Mono';font-size:20.0px;letter-spacing:0.416px;color:#12272e;transform:scaleX(1.1);transform-origin:0 0;">Client Hello (SNI=b1.encountergulf.world)</div>
<div style="left:0.00px;top:429.20px;width:2441.00px;height:28.05px;background:#a0a0a0;"></div>
<div class="t" style="left:114.52px;top:433.10px;font-family:'Liberation Mono';font-size:20.0px;letter-spacing:0.416px;color:#12272e;transform:scaleX(1.1);transform-origin:0 0;">224</div>
<div class="t" style="left:167.00px;top:433.10px;font-family:'Liberation Mono';font-size:20.0px;letter-spacing:0.416px;color:#12272e;transform:scaleX(1.1);transform-origin:0 0;">2025/171 12:25:56.452722</div>
<div class="t" style="left:505.50px;top:433.10px;font-family:'Liberation Mono';font-size:20.0px;letter-spacing:0.416px;color:#12272e;transform:scaleX(1.1);transform-origin:0 0;">172.16.1.128</div>
<div class="t" style="left:719.70px;top:433.10px;font-family:'Liberation Mono';font-size:20.0px;letter-spacing:0.416px;color:#12272e;transform:scaleX(1.1);transform-origin:0 0;">57945</div>
<div class="t" style="left:800.50px;top:433.10px;font-family:'Liberation Mono';font-size:20.0px;letter-spacing:0.416px;color:#12272e;transform:scaleX(1.1);transform-origin:0 0;">104.21.21.29</div>
<div class="t" style="left:1157.52px;top:433.10px;font-family:'Liberation Mono';font-size:20.0px;letter-spacing:0.416px;color:#12272e;transform:scaleX(1.1);transform-origin:0 0;">443</div>
<div class="t" style="left:1503.50px;top:433.10px;font-family:'Liberation Mono';font-size:20.0px;letter-spacing:0.416px;color:#12272e;transform:scaleX(1.1);transform-origin:0 0;">TCP</div>
<div class="t" style="left:1701.68px;top:433.10px;font-family:'Liberation Mono';font-size:20.0px;letter-spacing:0.416px;color:#12272e;transform:scaleX(1.1);transform-origin:0 0;">66</div>
<div class="t" style="left:1739.50px;top:433.10px;font-family:'Liberation Mono';font-size:20.0px;letter-spacing:0.416px;color:#12272e;transform:scaleX(1.1);transform-origin:0 0;">57945 <span style="position:relative;top:-2.2px;-webkit-text-stroke:0.8px currentColor">→</span> 443 [SYN] Seq=0 Win=65535 Len=0…</div>
<div style="left:0.00px;top:456.85px;width:2441.00px;height:28.05px;background:#e6e6ff;"></div>
<div class="t" style="left:114.52px;top:460.75px;font-family:'Liberation Mono';font-size:20.0px;letter-spacing:0.416px;color:#12272e;transform:scaleX(1.1);transform-origin:0 0;">227</div>
<div class="t" style="left:167.00px;top:460.75px;font-family:'Liberation Mono';font-size:20.0px;letter-spacing:0.416px;color:#12272e;transform:scaleX(1.1);transform-origin:0 0;">2025/171 12:25:56.485997</div>
<div class="t" style="left:505.50px;top:460.75px;font-family:'Liberation Mono';font-size:20.0px;letter-spacing:0.416px;color:#12272e;transform:scaleX(1.1);transform-origin:0 0;">172.16.1.128</div>
<div class="t" style="left:719.70px;top:460.75px;font-family:'Liberation Mono';font-size:20.0px;letter-spacing:0.416px;color:#12272e;transform:scaleX(1.1);transform-origin:0 0;">57945</div>
<div class="t" style="left:800.50px;top:460.75px;font-family:'Liberation Mono';font-size:20.0px;letter-spacing:0.416px;color:#12272e;transform:scaleX(1.1);transform-origin:0 0;">104.21.21.29</div>
<div class="t" style="left:1157.52px;top:460.75px;font-family:'Liberation Mono';font-size:20.0px;letter-spacing:0.416px;color:#12272e;transform:scaleX(1.1);transform-origin:0 0;">443</div>
<div class="t" style="left:1503.50px;top:460.75px;font-family:'Liberation Mono';font-size:20.0px;letter-spacing:0.416px;color:#12272e;transform:scaleX(1.1);transform-origin:0 0;">TLSv1.2</div>
<div class="t" style="left:1688.02px;top:460.75px;font-family:'Liberation Mono';font-size:20.0px;letter-spacing:0.416px;color:#12272e;transform:scaleX(1.1);transform-origin:0 0;">232</div>
<div class="t" style="left:1739.50px;top:460.75px;font-family:'Liberation Mono';font-size:20.0px;letter-spacing:0.416px;color:#12272e;transform:scaleX(1.1);transform-origin:0 0;">Client Hello (SNI=b1.encountergulf.world)</div>
<div style="left:0.00px;top:484.50px;width:2441.00px;height:28.05px;background:#a0a0a0;"></div>
<div class="t" style="left:100.86px;top:488.40px;font-family:'Liberation Mono';font-size:20.0px;letter-spacing:0.416px;color:#12272e;transform:scaleX(1.1);transform-origin:0 0;">1030</div>
<div class="t" style="left:167.00px;top:488.40px;font-family:'Liberation Mono';font-size:20.0px;letter-spacing:0.416px;color:#12272e;transform:scaleX(1.1);transform-origin:0 0;">2025/171 12:25:58.782049</div>
<div class="t" style="left:505.50px;top:488.40px;font-family:'Liberation Mono';font-size:20.0px;letter-spacing:0.416px;color:#12272e;transform:scaleX(1.1);transform-origin:0 0;">172.16.1.128</div>
<div class="t" style="left:719.70px;top:488.40px;font-family:'Liberation Mono';font-size:20.0px;letter-spacing:0.416px;color:#12272e;transform:scaleX(1.1);transform-origin:0 0;">57947</div>
<div class="t" style="left:800.50px;top:488.40px;font-family:'Liberation Mono';font-size:20.0px;letter-spacing:0.416px;color:#12272e;transform:scaleX(1.1);transform-origin:0 0;">104.21.21.29</div>
<div class="t" style="left:1157.52px;top:488.40px;font-family:'Liberation Mono';font-size:20.0px;letter-spacing:0.416px;color:#12272e;transform:scaleX(1.1);transform-origin:0 0;">443</div>
<div class="t" style="left:1503.50px;top:488.40px;font-family:'Liberation Mono';font-size:20.0px;letter-spacing:0.416px;color:#12272e;transform:scaleX(1.1);transform-origin:0 0;">TCP</div>
<div class="t" style="left:1701.68px;top:488.40px;font-family:'Liberation Mono';font-size:20.0px;letter-spacing:0.416px;color:#12272e;transform:scaleX(1.1);transform-origin:0 0;">66</div>
<div class="t" style="left:1739.50px;top:488.40px;font-family:'Liberation Mono';font-size:20.0px;letter-spacing:0.416px;color:#12272e;transform:scaleX(1.1);transform-origin:0 0;">57947 <span style="position:relative;top:-2.2px;-webkit-text-stroke:0.8px currentColor">→</span> 443 [SYN] Seq=0 Win=65535 Len=0…</div>
<div style="left:0.00px;top:512.15px;width:2441.00px;height:28.05px;background:#e6e6ff;"></div>
<div class="t" style="left:100.86px;top:516.05px;font-family:'Liberation Mono';font-size:20.0px;letter-spacing:0.416px;color:#12272e;transform:scaleX(1.1);transform-origin:0 0;">1033</div>
<div class="t" style="left:167.00px;top:516.05px;font-family:'Liberation Mono';font-size:20.0px;letter-spacing:0.416px;color:#12272e;transform:scaleX(1.1);transform-origin:0 0;">2025/171 12:25:58.901294</div>
<div class="t" style="left:505.50px;top:516.05px;font-family:'Liberation Mono';font-size:20.0px;letter-spacing:0.416px;color:#12272e;transform:scaleX(1.1);transform-origin:0 0;">172.16.1.128</div>
<div class="t" style="left:719.70px;top:516.05px;font-family:'Liberation Mono';font-size:20.0px;letter-spacing:0.416px;color:#12272e;transform:scaleX(1.1);transform-origin:0 0;">57947</div>
<div class="t" style="left:800.50px;top:516.05px;font-family:'Liberation Mono';font-size:20.0px;letter-spacing:0.416px;color:#12272e;transform:scaleX(1.1);transform-origin:0 0;">104.21.21.29</div>
<div class="t" style="left:1157.52px;top:516.05px;font-family:'Liberation Mono';font-size:20.0px;letter-spacing:0.416px;color:#12272e;transform:scaleX(1.1);transform-origin:0 0;">443</div>
<div class="t" style="left:1503.50px;top:516.05px;font-family:'Liberation Mono';font-size:20.0px;letter-spacing:0.416px;color:#12272e;transform:scaleX(1.1);transform-origin:0 0;">TLSv1.2</div>
<div class="t" style="left:1688.02px;top:516.05px;font-family:'Liberation Mono';font-size:20.0px;letter-spacing:0.416px;color:#12272e;transform:scaleX(1.1);transform-origin:0 0;">232</div>
<div class="t" style="left:1739.50px;top:516.05px;font-family:'Liberation Mono';font-size:20.0px;letter-spacing:0.416px;color:#12272e;transform:scaleX(1.1);transform-origin:0 0;">Client Hello (SNI=b1.encountergulf.world)</div>
<div style="left:0.00px;top:539.80px;width:2441.00px;height:28.05px;background:#a0a0a0;"></div>
<div class="t" style="left:100.86px;top:543.70px;font-family:'Liberation Mono';font-size:20.0px;letter-spacing:0.416px;color:#12272e;transform:scaleX(1.1);transform-origin:0 0;">3233</div>
<div class="t" style="left:167.00px;top:543.70px;font-family:'Liberation Mono';font-size:20.0px;letter-spacing:0.416px;color:#12272e;transform:scaleX(1.1);transform-origin:0 0;">2025/171 12:26:03.147396</div>
<div class="t" style="left:505.50px;top:543.70px;font-family:'Liberation Mono';font-size:20.0px;letter-spacing:0.416px;color:#12272e;transform:scaleX(1.1);transform-origin:0 0;">172.16.1.128</div>
<div class="t" style="left:719.70px;top:543.70px;font-family:'Liberation Mono';font-size:20.0px;letter-spacing:0.416px;color:#12272e;transform:scaleX(1.1);transform-origin:0 0;">57948</div>
<div class="t" style="left:800.50px;top:543.70px;font-family:'Liberation Mono';font-size:20.0px;letter-spacing:0.416px;color:#12272e;transform:scaleX(1.1);transform-origin:0 0;">104.21.21.29</div>
<div class="t" style="left:1157.52px;top:543.70px;font-family:'Liberation Mono';font-size:20.0px;letter-spacing:0.416px;color:#12272e;transform:scaleX(1.1);transform-origin:0 0;">443</div>
<div class="t" style="left:1503.50px;top:543.70px;font-family:'Liberation Mono';font-size:20.0px;letter-spacing:0.416px;color:#12272e;transform:scaleX(1.1);transform-origin:0 0;">TCP</div>
<div class="t" style="left:1701.68px;top:543.70px;font-family:'Liberation Mono';font-size:20.0px;letter-spacing:0.416px;color:#12272e;transform:scaleX(1.1);transform-origin:0 0;">66</div>
<div class="t" style="left:1739.50px;top:543.70px;font-family:'Liberation Mono';font-size:20.0px;letter-spacing:0.416px;color:#12272e;transform:scaleX(1.1);transform-origin:0 0;">57948 <span style="position:relative;top:-2.2px;-webkit-text-stroke:0.8px currentColor">→</span> 443 [SYN] Seq=0 Win=65535 Len=0…</div>
<div style="left:0.00px;top:567.45px;width:2441.00px;height:28.05px;background:#e6e6ff;"></div>
<div class="t" style="left:100.86px;top:571.35px;font-family:'Liberation Mono';font-size:20.0px;letter-spacing:0.416px;color:#12272e;transform:scaleX(1.1);transform-origin:0 0;">3236</div>
<div class="t" style="left:167.00px;top:571.35px;font-family:'Liberation Mono';font-size:20.0px;letter-spacing:0.416px;color:#12272e;transform:scaleX(1.1);transform-origin:0 0;">2025/171 12:26:03.184966</div>
<div class="t" style="left:505.50px;top:571.35px;font-family:'Liberation Mono';font-size:20.0px;letter-spacing:0.416px;color:#12272e;transform:scaleX(1.1);transform-origin:0 0;">172.16.1.128</div>
<div class="t" style="left:719.70px;top:571.35px;font-family:'Liberation Mono';font-size:20.0px;letter-spacing:0.416px;color:#12272e;transform:scaleX(1.1);transform-origin:0 0;">57948</div>
<div class="t" style="left:800.50px;top:571.35px;font-family:'Liberation Mono';font-size:20.0px;letter-spacing:0.416px;color:#12272e;transform:scaleX(1.1);transform-origin:0 0;">104.21.21.29</div>
<div class="t" style="left:1157.52px;top:571.35px;font-family:'Liberation Mono';font-size:20.0px;letter-spacing:0.416px;color:#12272e;transform:scaleX(1.1);transform-origin:0 0;">443</div>
<div class="t" style="left:1503.50px;top:571.35px;font-family:'Liberation Mono';font-size:20.0px;letter-spacing:0.416px;color:#12272e;transform:scaleX(1.1);transform-origin:0 0;">TLSv1.2</div>
<div class="t" style="left:1688.02px;top:571.35px;font-family:'Liberation Mono';font-size:20.0px;letter-spacing:0.416px;color:#12272e;transform:scaleX(1.1);transform-origin:0 0;">232</div>
<div class="t" style="left:1739.50px;top:571.35px;font-family:'Liberation Mono';font-size:20.0px;letter-spacing:0.416px;color:#12272e;transform:scaleX(1.1);transform-origin:0 0;">Client Hello (SNI=b1.encountergulf.world)</div>
<div style="left:0.00px;top:595.10px;width:2441.00px;height:28.05px;background:#a0a0a0;"></div>
<div class="t" style="left:100.86px;top:599.00px;font-family:'Liberation Mono';font-size:20.0px;letter-spacing:0.416px;color:#12272e;transform:scaleX(1.1);transform-origin:0 0;">4802</div>
<div class="t" style="left:167.00px;top:599.00px;font-family:'Liberation Mono';font-size:20.0px;letter-spacing:0.416px;color:#12272e;transform:scaleX(1.1);transform-origin:0 0;">2025/171 12:26:06.070223</div>
<div class="t" style="left:505.50px;top:599.00px;font-family:'Liberation Mono';font-size:20.0px;letter-spacing:0.416px;color:#12272e;transform:scaleX(1.1);transform-origin:0 0;">172.16.1.128</div>
<div class="t" style="left:719.70px;top:599.00px;font-family:'Liberation Mono';font-size:20.0px;letter-spacing:0.416px;color:#12272e;transform:scaleX(1.1);transform-origin:0 0;">57950</div>
<div class="t" style="left:800.50px;top:599.00px;font-family:'Liberation Mono';font-size:20.0px;letter-spacing:0.416px;color:#12272e;transform:scaleX(1.1);transform-origin:0 0;">104.21.21.29</div>
<div class="t" style="left:1157.52px;top:599.00px;font-family:'Liberation Mono';font-size:20.0px;letter-spacing:0.416px;color:#12272e;transform:scaleX(1.1);transform-origin:0 0;">443</div>
<div class="t" style="left:1503.50px;top:599.00px;font-family:'Liberation Mono';font-size:20.0px;letter-spacing:0.416px;color:#12272e;transform:scaleX(1.1);transform-origin:0 0;">TCP</div>
<div class="t" style="left:1701.68px;top:599.00px;font-family:'Liberation Mono';font-size:20.0px;letter-spacing:0.416px;color:#12272e;transform:scaleX(1.1);transform-origin:0 0;">66</div>
<div class="t" style="left:1739.50px;top:599.00px;font-family:'Liberation Mono';font-size:20.0px;letter-spacing:0.416px;color:#12272e;transform:scaleX(1.1);transform-origin:0 0;">57950 <span style="position:relative;top:-2.2px;-webkit-text-stroke:0.8px currentColor">→</span> 443 [SYN] Seq=0 Win=65535 Len=0…</div>
<div style="left:0.00px;top:622.75px;width:2441.00px;height:28.05px;background:#e6e6ff;"></div>
<div class="t" style="left:100.86px;top:626.65px;font-family:'Liberation Mono';font-size:20.0px;letter-spacing:0.416px;color:#12272e;transform:scaleX(1.1);transform-origin:0 0;">4805</div>
<div class="t" style="left:167.00px;top:626.65px;font-family:'Liberation Mono';font-size:20.0px;letter-spacing:0.416px;color:#12272e;transform:scaleX(1.1);transform-origin:0 0;">2025/171 12:26:06.100805</div>
<div class="t" style="left:505.50px;top:626.65px;font-family:'Liberation Mono';font-size:20.0px;letter-spacing:0.416px;color:#12272e;transform:scaleX(1.1);transform-origin:0 0;">172.16.1.128</div>
<div class="t" style="left:719.70px;top:626.65px;font-family:'Liberation Mono';font-size:20.0px;letter-spacing:0.416px;color:#12272e;transform:scaleX(1.1);transform-origin:0 0;">57950</div>
<div class="t" style="left:800.50px;top:626.65px;font-family:'Liberation Mono';font-size:20.0px;letter-spacing:0.416px;color:#12272e;transform:scaleX(1.1);transform-origin:0 0;">104.21.21.29</div>
<div class="t" style="left:1157.52px;top:626.65px;font-family:'Liberation Mono';font-size:20.0px;letter-spacing:0.416px;color:#12272e;transform:scaleX(1.1);transform-origin:0 0;">443</div>
<div class="t" style="left:1503.50px;top:626.65px;font-family:'Liberation Mono';font-size:20.0px;letter-spacing:0.416px;color:#12272e;transform:scaleX(1.1);transform-origin:0 0;">TLSv1.2</div>
<div class="t" style="left:1688.02px;top:626.65px;font-family:'Liberation Mono';font-size:20.0px;letter-spacing:0.416px;color:#12272e;transform:scaleX(1.1);transform-origin:0 0;">232</div>
<div class="t" style="left:1739.50px;top:626.65px;font-family:'Liberation Mono';font-size:20.0px;letter-spacing:0.416px;color:#12272e;transform:scaleX(1.1);transform-origin:0 0;">Client Hello (SNI=b1.encountergulf.world)</div>
<div style="left:0.00px;top:650.40px;width:2441.00px;height:28.05px;background:#a0a0a0;"></div>
<div class="t" style="left:100.86px;top:654.30px;font-family:'Liberation Mono';font-size:20.0px;letter-spacing:0.416px;color:#12272e;transform:scaleX(1.1);transform-origin:0 0;">6391</div>
<div class="t" style="left:167.00px;top:654.30px;font-family:'Liberation Mono';font-size:20.0px;letter-spacing:0.416px;color:#12272e;transform:scaleX(1.1);transform-origin:0 0;">2025/171 12:26:08.995536</div>
<div class="t" style="left:505.50px;top:654.30px;font-family:'Liberation Mono';font-size:20.0px;letter-spacing:0.416px;color:#12272e;transform:scaleX(1.1);transform-origin:0 0;">172.16.1.128</div>
<div class="t" style="left:719.70px;top:654.30px;font-family:'Liberation Mono';font-size:20.0px;letter-spacing:0.416px;color:#12272e;transform:scaleX(1.1);transform-origin:0 0;">57951</div>
<div class="t" style="left:800.50px;top:654.30px;font-family:'Liberation Mono';font-size:20.0px;letter-spacing:0.416px;color:#12272e;transform:scaleX(1.1);transform-origin:0 0;">104.21.21.29</div>
<div class="t" style="left:1157.52px;top:654.30px;font-family:'Liberation Mono';font-size:20.0px;letter-spacing:0.416px;color:#12272e;transform:scaleX(1.1);transform-origin:0 0;">443</div>
<div class="t" style="left:1503.50px;top:654.30px;font-family:'Liberation Mono';font-size:20.0px;letter-spacing:0.416px;color:#12272e;transform:scaleX(1.1);transform-origin:0 0;">TCP</div>
<div class="t" style="left:1701.68px;top:654.30px;font-family:'Liberation Mono';font-size:20.0px;letter-spacing:0.416px;color:#12272e;transform:scaleX(1.1);transform-origin:0 0;">66</div>
<div class="t" style="left:1739.50px;top:654.30px;font-family:'Liberation Mono';font-size:20.0px;letter-spacing:0.416px;color:#12272e;transform:scaleX(1.1);transform-origin:0 0;">57951 <span style="position:relative;top:-2.2px;-webkit-text-stroke:0.8px currentColor">→</span> 443 [SYN] Seq=0 Win=65535 Len=0…</div>
<div style="left:0.00px;top:678.05px;width:2441.00px;height:28.05px;background:#e6e6ff;"></div>
<div class="t" style="left:100.86px;top:681.95px;font-family:'Liberation Mono';font-size:20.0px;letter-spacing:0.416px;color:#12272e;transform:scaleX(1.1);transform-origin:0 0;">6394</div>
<div class="t" style="left:167.00px;top:681.95px;font-family:'Liberation Mono';font-size:20.0px;letter-spacing:0.416px;color:#12272e;transform:scaleX(1.1);transform-origin:0 0;">2025/171 12:26:09.038618</div>
<div class="t" style="left:505.50px;top:681.95px;font-family:'Liberation Mono';font-size:20.0px;letter-spacing:0.416px;color:#12272e;transform:scaleX(1.1);transform-origin:0 0;">172.16.1.128</div>
<div class="t" style="left:719.70px;top:681.95px;font-family:'Liberation Mono';font-size:20.0px;letter-spacing:0.416px;color:#12272e;transform:scaleX(1.1);transform-origin:0 0;">57951</div>
<div class="t" style="left:800.50px;top:681.95px;font-family:'Liberation Mono';font-size:20.0px;letter-spacing:0.416px;color:#12272e;transform:scaleX(1.1);transform-origin:0 0;">104.21.21.29</div>
<div class="t" style="left:1157.52px;top:681.95px;font-family:'Liberation Mono';font-size:20.0px;letter-spacing:0.416px;color:#12272e;transform:scaleX(1.1);transform-origin:0 0;">443</div>
<div class="t" style="left:1503.50px;top:681.95px;font-family:'Liberation Mono';font-size:20.0px;letter-spacing:0.416px;color:#12272e;transform:scaleX(1.1);transform-origin:0 0;">TLSv1.2</div>
<div class="t" style="left:1688.02px;top:681.95px;font-family:'Liberation Mono';font-size:20.0px;letter-spacing:0.416px;color:#12272e;transform:scaleX(1.1);transform-origin:0 0;">232</div>
<div class="t" style="left:1739.50px;top:681.95px;font-family:'Liberation Mono';font-size:20.0px;letter-spacing:0.416px;color:#12272e;transform:scaleX(1.1);transform-origin:0 0;">Client Hello (SNI=b1.encountergulf.world)</div>
<div style="left:0.00px;top:705.70px;width:2441.00px;height:28.05px;background:#a0a0a0;"></div>
<div class="t" style="left:100.86px;top:709.60px;font-family:'Liberation Mono';font-size:20.0px;letter-spacing:0.416px;color:#12272e;transform:scaleX(1.1);transform-origin:0 0;">6408</div>
<div class="t" style="left:167.00px;top:709.60px;font-family:'Liberation Mono';font-size:20.0px;letter-spacing:0.416px;color:#12272e;transform:scaleX(1.1);transform-origin:0 0;">2025/171 12:26:09.611892</div>
<div class="t" style="left:505.50px;top:709.60px;font-family:'Liberation Mono';font-size:20.0px;letter-spacing:0.416px;color:#12272e;transform:scaleX(1.1);transform-origin:0 0;">172.16.1.128</div>
<div class="t" style="left:719.70px;top:709.60px;font-family:'Liberation Mono';font-size:20.0px;letter-spacing:0.416px;color:#12272e;transform:scaleX(1.1);transform-origin:0 0;">57952</div>
<div class="t" style="left:800.50px;top:709.60px;font-family:'Liberation Mono';font-size:20.0px;letter-spacing:0.416px;color:#12272e;transform:scaleX(1.1);transform-origin:0 0;">104.21.21.29</div>
<div class="t" style="left:1157.52px;top:709.60px;font-family:'Liberation Mono';font-size:20.0px;letter-spacing:0.416px;color:#12272e;transform:scaleX(1.1);transform-origin:0 0;">443</div>
<div class="t" style="left:1503.50px;top:709.60px;font-family:'Liberation Mono';font-size:20.0px;letter-spacing:0.416px;color:#12272e;transform:scaleX(1.1);transform-origin:0 0;">TCP</div>
<div class="t" style="left:1701.68px;top:709.60px;font-family:'Liberation Mono';font-size:20.0px;letter-spacing:0.416px;color:#12272e;transform:scaleX(1.1);transform-origin:0 0;">66</div>
<div class="t" style="left:1739.50px;top:709.60px;font-family:'Liberation Mono';font-size:20.0px;letter-spacing:0.416px;color:#12272e;transform:scaleX(1.1);transform-origin:0 0;">57952 <span style="position:relative;top:-2.2px;-webkit-text-stroke:0.8px currentColor">→</span> 443 [SYN] Seq=0 Win=65535 Len=0…</div>
<div style="left:0.00px;top:733.35px;width:2441.00px;height:28.05px;background:#e6e6ff;"></div>
<div class="t" style="left:100.86px;top:737.25px;font-family:'Liberation Mono';font-size:20.0px;letter-spacing:0.416px;color:#12272e;transform:scaleX(1.1);transform-origin:0 0;">6411</div>
<div class="t" style="left:167.00px;top:737.25px;font-family:'Liberation Mono';font-size:20.0px;letter-spacing:0.416px;color:#12272e;transform:scaleX(1.1);transform-origin:0 0;">2025/171 12:26:09.640528</div>
<div class="t" style="left:505.50px;top:737.25px;font-family:'Liberation Mono';font-size:20.0px;letter-spacing:0.416px;color:#12272e;transform:scaleX(1.1);transform-origin:0 0;">172.16.1.128</div>
<div class="t" style="left:719.70px;top:737.25px;font-family:'Liberation Mono';font-size:20.0px;letter-spacing:0.416px;color:#12272e;transform:scaleX(1.1);transform-origin:0 0;">57952</div>
<div class="t" style="left:800.50px;top:737.25px;font-family:'Liberation Mono';font-size:20.0px;letter-spacing:0.416px;color:#12272e;transform:scaleX(1.1);transform-origin:0 0;">104.21.21.29</div>
<div class="t" style="left:1157.52px;top:737.25px;font-family:'Liberation Mono';font-size:20.0px;letter-spacing:0.416px;color:#12272e;transform:scaleX(1.1);transform-origin:0 0;">443</div>
<div class="t" style="left:1503.50px;top:737.25px;font-family:'Liberation Mono';font-size:20.0px;letter-spacing:0.416px;color:#12272e;transform:scaleX(1.1);transform-origin:0 0;">TLSv1.2</div>
<div class="t" style="left:1688.02px;top:737.25px;font-family:'Liberation Mono';font-size:20.0px;letter-spacing:0.416px;color:#12272e;transform:scaleX(1.1);transform-origin:0 0;">232</div>
<div class="t" style="left:1739.50px;top:737.25px;font-family:'Liberation Mono';font-size:20.0px;letter-spacing:0.416px;color:#12272e;transform:scaleX(1.1);transform-origin:0 0;">Client Hello (SNI=b1.encountergulf.world)</div>
<div style="left:0.00px;top:761.00px;width:2441.00px;height:28.05px;background:#a0a0a0;"></div>
<div class="t" style="left:100.86px;top:764.90px;font-family:'Liberation Mono';font-size:20.0px;letter-spacing:0.416px;color:#12272e;transform:scaleX(1.1);transform-origin:0 0;">6661</div>
<div class="t" style="left:167.00px;top:764.90px;font-family:'Liberation Mono';font-size:20.0px;letter-spacing:0.416px;color:#12272e;transform:scaleX(1.1);transform-origin:0 0;">2025/171 12:26:10.774654</div>
<div class="t" style="left:505.50px;top:764.90px;font-family:'Liberation Mono';font-size:20.0px;letter-spacing:0.416px;color:#12272e;transform:scaleX(1.1);transform-origin:0 0;">172.16.1.128</div>
<div class="t" style="left:719.70px;top:764.90px;font-family:'Liberation Mono';font-size:20.0px;letter-spacing:0.416px;color:#12272e;transform:scaleX(1.1);transform-origin:0 0;">57953</div>
<div class="t" style="left:800.50px;top:764.90px;font-family:'Liberation Mono';font-size:20.0px;letter-spacing:0.416px;color:#12272e;transform:scaleX(1.1);transform-origin:0 0;">104.21.21.29</div>
<div class="t" style="left:1157.52px;top:764.90px;font-family:'Liberation Mono';font-size:20.0px;letter-spacing:0.416px;color:#12272e;transform:scaleX(1.1);transform-origin:0 0;">443</div>
<div class="t" style="left:1503.50px;top:764.90px;font-family:'Liberation Mono';font-size:20.0px;letter-spacing:0.416px;color:#12272e;transform:scaleX(1.1);transform-origin:0 0;">TCP</div>
<div class="t" style="left:1701.68px;top:764.90px;font-family:'Liberation Mono';font-size:20.0px;letter-spacing:0.416px;color:#12272e;transform:scaleX(1.1);transform-origin:0 0;">66</div>
<div class="t" style="left:1739.50px;top:764.90px;font-family:'Liberation Mono';font-size:20.0px;letter-spacing:0.416px;color:#12272e;transform:scaleX(1.1);transform-origin:0 0;">57953 <span style="position:relative;top:-2.2px;-webkit-text-stroke:0.8px currentColor">→</span> 443 [SYN] Seq=0 Win=65535 Len=0…</div>
<div style="left:0.00px;top:788.65px;width:2441.00px;height:28.05px;background:#e6e6ff;"></div>
<div class="t" style="left:100.86px;top:792.55px;font-family:'Liberation Mono';font-size:20.0px;letter-spacing:0.416px;color:#12272e;transform:scaleX(1.1);transform-origin:0 0;">6664</div>
<div class="t" style="left:167.00px;top:792.55px;font-family:'Liberation Mono';font-size:20.0px;letter-spacing:0.416px;color:#12272e;transform:scaleX(1.1);transform-origin:0 0;">2025/171 12:26:10.807060</div>
<div class="t" style="left:505.50px;top:792.55px;font-family:'Liberation Mono';font-size:20.0px;letter-spacing:0.416px;color:#12272e;transform:scaleX(1.1);transform-origin:0 0;">172.16.1.128</div>
<div class="t" style="left:719.70px;top:792.55px;font-family:'Liberation Mono';font-size:20.0px;letter-spacing:0.416px;color:#12272e;transform:scaleX(1.1);transform-origin:0 0;">57953</div>
<div class="t" style="left:800.50px;top:792.55px;font-family:'Liberation Mono';font-size:20.0px;letter-spacing:0.416px;color:#12272e;transform:scaleX(1.1);transform-origin:0 0;">104.21.21.29</div>
<div class="t" style="left:1157.52px;top:792.55px;font-family:'Liberation Mono';font-size:20.0px;letter-spacing:0.416px;color:#12272e;transform:scaleX(1.1);transform-origin:0 0;">443</div>
<div class="t" style="left:1503.50px;top:792.55px;font-family:'Liberation Mono';font-size:20.0px;letter-spacing:0.416px;color:#12272e;transform:scaleX(1.1);transform-origin:0 0;">TLSv1.2</div>
<div class="t" style="left:1688.02px;top:792.55px;font-family:'Liberation Mono';font-size:20.0px;letter-spacing:0.416px;color:#12272e;transform:scaleX(1.1);transform-origin:0 0;">232</div>
<div class="t" style="left:1739.50px;top:792.55px;font-family:'Liberation Mono';font-size:20.0px;letter-spacing:0.416px;color:#12272e;transform:scaleX(1.1);transform-origin:0 0;">Client Hello (SNI=b1.encountergulf.world)</div>
<div style="left:0.00px;top:816.30px;width:2441.00px;height:28.05px;background:#a0a0a0;"></div>
<div class="t" style="left:100.86px;top:820.20px;font-family:'Liberation Mono';font-size:20.0px;letter-spacing:0.416px;color:#12272e;transform:scaleX(1.1);transform-origin:0 0;">7081</div>
<div class="t" style="left:167.00px;top:820.20px;font-family:'Liberation Mono';font-size:20.0px;letter-spacing:0.416px;color:#12272e;transform:scaleX(1.1);transform-origin:0 0;">2025/171 12:26:12.336690</div>
<div class="t" style="left:505.50px;top:820.20px;font-family:'Liberation Mono';font-size:20.0px;letter-spacing:0.416px;color:#12272e;transform:scaleX(1.1);transform-origin:0 0;">172.16.1.128</div>
<div class="t" style="left:719.70px;top:820.20px;font-family:'Liberation Mono';font-size:20.0px;letter-spacing:0.416px;color:#12272e;transform:scaleX(1.1);transform-origin:0 0;">57955</div>
<div class="t" style="left:800.50px;top:820.20px;font-family:'Liberation Mono';font-size:20.0px;letter-spacing:0.416px;color:#12272e;transform:scaleX(1.1);transform-origin:0 0;">104.21.21.29</div>
<div class="t" style="left:1157.52px;top:820.20px;font-family:'Liberation Mono';font-size:20.0px;letter-spacing:0.416px;color:#12272e;transform:scaleX(1.1);transform-origin:0 0;">443</div>
<div class="t" style="left:1503.50px;top:820.20px;font-family:'Liberation Mono';font-size:20.0px;letter-spacing:0.416px;color:#12272e;transform:scaleX(1.1);transform-origin:0 0;">TCP</div>
<div class="t" style="left:1701.68px;top:820.20px;font-family:'Liberation Mono';font-size:20.0px;letter-spacing:0.416px;color:#12272e;transform:scaleX(1.1);transform-origin:0 0;">66</div>
<div class="t" style="left:1739.50px;top:820.20px;font-family:'Liberation Mono';font-size:20.0px;letter-spacing:0.416px;color:#12272e;transform:scaleX(1.1);transform-origin:0 0;">57955 <span style="position:relative;top:-2.2px;-webkit-text-stroke:0.8px currentColor">→</span> 443 [SYN] Seq=0 Win=65535 Len=0…</div>
<div style="left:0.00px;top:843.95px;width:2441.00px;height:28.05px;background:#e6e6ff;"></div>
<div class="t" style="left:100.86px;top:847.85px;font-family:'Liberation Mono';font-size:20.0px;letter-spacing:0.416px;color:#12272e;transform:scaleX(1.1);transform-origin:0 0;">7084</div>
<div class="t" style="left:167.00px;top:847.85px;font-family:'Liberation Mono';font-size:20.0px;letter-spacing:0.416px;color:#12272e;transform:scaleX(1.1);transform-origin:0 0;">2025/171 12:26:12.371190</div>
<div class="t" style="left:505.50px;top:847.85px;font-family:'Liberation Mono';font-size:20.0px;letter-spacing:0.416px;color:#12272e;transform:scaleX(1.1);transform-origin:0 0;">172.16.1.128</div>
<div class="t" style="left:719.70px;top:847.85px;font-family:'Liberation Mono';font-size:20.0px;letter-spacing:0.416px;color:#12272e;transform:scaleX(1.1);transform-origin:0 0;">57955</div>
<div class="t" style="left:800.50px;top:847.85px;font-family:'Liberation Mono';font-size:20.0px;letter-spacing:0.416px;color:#12272e;transform:scaleX(1.1);transform-origin:0 0;">104.21.21.29</div>
<div class="t" style="left:1157.52px;top:847.85px;font-family:'Liberation Mono';font-size:20.0px;letter-spacing:0.416px;color:#12272e;transform:scaleX(1.1);transform-origin:0 0;">443</div>
<div class="t" style="left:1503.50px;top:847.85px;font-family:'Liberation Mono';font-size:20.0px;letter-spacing:0.416px;color:#12272e;transform:scaleX(1.1);transform-origin:0 0;">TLSv1.2</div>
<div class="t" style="left:1688.02px;top:847.85px;font-family:'Liberation Mono';font-size:20.0px;letter-spacing:0.416px;color:#12272e;transform:scaleX(1.1);transform-origin:0 0;">232</div>
<div class="t" style="left:1739.50px;top:847.85px;font-family:'Liberation Mono';font-size:20.0px;letter-spacing:0.416px;color:#12272e;transform:scaleX(1.1);transform-origin:0 0;">Client Hello (SNI=b1.encountergulf.world)</div>
<div style="left:0.00px;top:871.60px;width:2441.00px;height:28.05px;background:#e4ffc7;"></div>
<div class="t" style="left:100.86px;top:875.50px;font-family:'Liberation Mono';font-size:20.0px;letter-spacing:0.416px;color:#12272e;transform:scaleX(1.1);transform-origin:0 0;">8285</div>
<div class="t" style="left:167.00px;top:875.50px;font-family:'Liberation Mono';font-size:20.0px;letter-spacing:0.416px;color:#12272e;transform:scaleX(1.1);transform-origin:0 0;">2025/171 12:26:14.506062</div>
<div class="t" style="left:505.50px;top:875.50px;font-family:'Liberation Mono';font-size:20.0px;letter-spacing:0.416px;color:#12272e;transform:scaleX(1.1);transform-origin:0 0;">172.16.1.128</div>
<div class="t" style="left:719.70px;top:875.50px;font-family:'Liberation Mono';font-size:20.0px;letter-spacing:0.416px;color:#12272e;transform:scaleX(1.1);transform-origin:0 0;">57956</div>
<div class="t" style="left:800.50px;top:875.50px;font-family:'Liberation Mono';font-size:20.0px;letter-spacing:0.416px;color:#12272e;transform:scaleX(1.1);transform-origin:0 0;">104.21.21.29</div>
<div class="t" style="left:1171.18px;top:875.50px;font-family:'Liberation Mono';font-size:20.0px;letter-spacing:0.416px;color:#12272e;transform:scaleX(1.1);transform-origin:0 0;">80</div>
<div class="t" style="left:1503.50px;top:875.50px;font-family:'Liberation Mono';font-size:20.0px;letter-spacing:0.416px;color:#12272e;transform:scaleX(1.1);transform-origin:0 0;">TCP</div>
<div class="t" style="left:1701.68px;top:875.50px;font-family:'Liberation Mono';font-size:20.0px;letter-spacing:0.416px;color:#12272e;transform:scaleX(1.1);transform-origin:0 0;">66</div>
<div class="t" style="left:1739.50px;top:875.50px;font-family:'Liberation Mono';font-size:20.0px;letter-spacing:0.416px;color:#12272e;transform:scaleX(1.1);transform-origin:0 0;">57956 <span style="position:relative;top:-2.2px;-webkit-text-stroke:0.8px currentColor">→</span> 80 [SYN] Seq=0 Win=65535 Len=0 …</div>
<div style="left:0.00px;top:899.25px;width:2441.00px;height:28.05px;background:#b5e7d4;"></div>
<div class="t" style="left:100.86px;top:903.15px;font-family:'Liberation Mono';font-size:20.0px;letter-spacing:0.416px;color:#12272e;transform:scaleX(1.1);transform-origin:0 0;">8288</div>
<div class="t" style="left:167.00px;top:903.15px;font-family:'Liberation Mono';font-size:20.0px;letter-spacing:0.416px;color:#12272e;transform:scaleX(1.1);transform-origin:0 0;">2025/171 12:26:14.544034</div>
<div class="t" style="left:505.50px;top:903.15px;font-family:'Liberation Mono';font-size:20.0px;letter-spacing:0.416px;color:#12272e;transform:scaleX(1.1);transform-origin:0 0;">172.16.1.128</div>
<div class="t" style="left:719.70px;top:903.15px;font-family:'Liberation Mono';font-size:20.0px;letter-spacing:0.416px;color:#12272e;transform:scaleX(1.1);transform-origin:0 0;">57956</div>
<div class="t" style="left:800.50px;top:903.15px;font-family:'Liberation Mono';font-size:20.0px;letter-spacing:0.416px;color:#12272e;transform:scaleX(1.1);transform-origin:0 0;">104.21.21.29</div>
<div class="t" style="left:1171.18px;top:903.15px;font-family:'Liberation Mono';font-size:20.0px;letter-spacing:0.416px;color:#12272e;transform:scaleX(1.1);transform-origin:0 0;">80</div>
<div class="t" style="left:1503.50px;top:903.15px;font-family:'Liberation Mono';font-size:20.0px;letter-spacing:0.416px;color:#12272e;transform:scaleX(1.1);transform-origin:0 0;">HTTP</div>
<div class="t" style="left:1688.02px;top:903.15px;font-family:'Liberation Mono';font-size:20.0px;letter-spacing:0.416px;color:#12272e;transform:scaleX(1.1);transform-origin:0 0;">128</div>
<div class="t" style="left:1739.50px;top:903.15px;font-family:'Liberation Mono';font-size:20.0px;letter-spacing:0.416px;color:#12272e;transform:scaleX(1.1);transform-origin:0 0;">GET /shrk.bin HTTP/1.1</div>
<div class="t" style="left:2312.00px;top:903.15px;font-family:'Liberation Mono';font-size:20.0px;letter-spacing:0.416px;color:#12272e;transform:scaleX(1.1);transform-origin:0 0;">h4.chattersc</div>
<div style="left:1084px;top:900.25px;width:116px;height:24.65px;border:2px dotted #333"></div>
<div style="left:0.00px;top:926.90px;width:2441.00px;height:28.05px;background:#a0a0a0;"></div>
<div class="t" style="left:87.20px;top:930.80px;font-family:'Liberation Mono';font-size:20.0px;letter-spacing:0.416px;color:#12272e;transform:scaleX(1.1);transform-origin:0 0;">14391</div>
<div class="t" style="left:167.00px;top:930.80px;font-family:'Liberation Mono';font-size:20.0px;letter-spacing:0.416px;color:#12272e;transform:scaleX(1.1);transform-origin:0 0;">2025/171 12:26:18.489731</div>
<div class="t" style="left:505.50px;top:930.80px;font-family:'Liberation Mono';font-size:20.0px;letter-spacing:0.416px;color:#12272e;transform:scaleX(1.1);transform-origin:0 0;">172.16.1.128</div>
<div class="t" style="left:719.70px;top:930.80px;font-family:'Liberation Mono';font-size:20.0px;letter-spacing:0.416px;color:#12272e;transform:scaleX(1.1);transform-origin:0 0;">57960</div>
<div class="t" style="left:800.50px;top:930.80px;font-family:'Liberation Mono';font-size:20.0px;letter-spacing:0.416px;color:#12272e;transform:scaleX(1.1);transform-origin:0 0;">104.21.21.29</div>
<div class="t" style="left:1157.52px;top:930.80px;font-family:'Liberation Mono';font-size:20.0px;letter-spacing:0.416px;color:#12272e;transform:scaleX(1.1);transform-origin:0 0;">443</div>
<div class="t" style="left:1503.50px;top:930.80px;font-family:'Liberation Mono';font-size:20.0px;letter-spacing:0.416px;color:#12272e;transform:scaleX(1.1);transform-origin:0 0;">TCP</div>
<div class="t" style="left:1701.68px;top:930.80px;font-family:'Liberation Mono';font-size:20.0px;letter-spacing:0.416px;color:#12272e;transform:scaleX(1.1);transform-origin:0 0;">66</div>
<div class="t" style="left:1739.50px;top:930.80px;font-family:'Liberation Mono';font-size:20.0px;letter-spacing:0.416px;color:#12272e;transform:scaleX(1.1);transform-origin:0 0;">57960 <span style="position:relative;top:-2.2px;-webkit-text-stroke:0.8px currentColor">→</span> 443 [SYN] Seq=0 Win=65535 Len=0…</div>
<div style="left:0.00px;top:954.55px;width:2441.00px;height:28.05px;background:#e6e6ff;"></div>
<div class="t" style="left:87.20px;top:958.45px;font-family:'Liberation Mono';font-size:20.0px;letter-spacing:0.416px;color:#12272e;transform:scaleX(1.1);transform-origin:0 0;">14394</div>
<div class="t" style="left:167.00px;top:958.45px;font-family:'Liberation Mono';font-size:20.0px;letter-spacing:0.416px;color:#12272e;transform:scaleX(1.1);transform-origin:0 0;">2025/171 12:26:18.536698</div>
<div class="t" style="left:505.50px;top:958.45px;font-family:'Liberation Mono';font-size:20.0px;letter-spacing:0.416px;color:#12272e;transform:scaleX(1.1);transform-origin:0 0;">172.16.1.128</div>
<div class="t" style="left:719.70px;top:958.45px;font-family:'Liberation Mono';font-size:20.0px;letter-spacing:0.416px;color:#12272e;transform:scaleX(1.1);transform-origin:0 0;">57960</div>
<div class="t" style="left:800.50px;top:958.45px;font-family:'Liberation Mono';font-size:20.0px;letter-spacing:0.416px;color:#12272e;transform:scaleX(1.1);transform-origin:0 0;">104.21.21.29</div>
<div class="t" style="left:1157.52px;top:958.45px;font-family:'Liberation Mono';font-size:20.0px;letter-spacing:0.416px;color:#12272e;transform:scaleX(1.1);transform-origin:0 0;">443</div>
<div class="t" style="left:1503.50px;top:958.45px;font-family:'Liberation Mono';font-size:20.0px;letter-spacing:0.416px;color:#12272e;transform:scaleX(1.1);transform-origin:0 0;">TLSv1.2</div>
<div class="t" style="left:1688.02px;top:958.45px;font-family:'Liberation Mono';font-size:20.0px;letter-spacing:0.416px;color:#12272e;transform:scaleX(1.1);transform-origin:0 0;">232</div>
<div class="t" style="left:1739.50px;top:958.45px;font-family:'Liberation Mono';font-size:20.0px;letter-spacing:0.416px;color:#12272e;transform:scaleX(1.1);transform-origin:0 0;">Client Hello (SNI=b1.encountergulf.world)</div>
<div style="left:13.00px;top:883.60px;width:2.00px;height:45.00px;background:#8c9c9c;"></div>
<div style="left:13.00px;top:883.60px;width:15.50px;height:2.00px;background:#8c9c9c;"></div>
<div style="left:1.00px;top:911.60px;width:28.00px;height:2.00px;background:#8c9c9c;"></div>
<svg style="left:20.00px;top:906.60px" width="11" height="12" viewBox="0 0 11 12"><path d="M1 1 L10 6 L1 11 Z" fill="#8c9c9c"/></svg>
<div style="left:2439.30px;top:166.00px;width:1.70px;height:1017.00px;background:rgba(40,40,60,0.16);"></div>
<div style="left:0.00px;top:1154.50px;width:2441.00px;height:25.50px;background:#f0f0f0;"></div>
<div style="left:30.00px;top:1154.50px;width:2175.00px;height:25.50px;background:#cdcdcd;"></div>
<svg style="left:6.00px;top:1160.00px" width="14" height="14" viewBox="0 0 14 14"><path d="M10 2 L4 7 L10 12" stroke="#606060" stroke-width="2.4" fill="none"/></svg>
<svg style="left:2418.00px;top:1160.00px" width="14" height="14" viewBox="0 0 14 14"><path d="M4 2 L10 7 L4 12" stroke="#606060" stroke-width="2.4" fill="none"/></svg>
<div style="left:0.00px;top:1180.00px;width:2441.00px;height:3.50px;background:#c4c7cb;"></div>
<div style="left:0.00px;top:1183.50px;width:2441.00px;height:7.00px;background:#f0f0f0;"></div>
<div style="left:0.00px;top:1190.30px;width:1212.50px;height:1.80px;background:#b0b4bb;"></div>
<div style="left:0.00px;top:1192.10px;width:1209.20px;height:1.90px;background:#cdd0d5;"></div>
<div style="left:0.00px;top:1194.00px;width:1209.20px;height:405.60px;background:#ffffff;"></div>
<div style="left:1209.20px;top:1192.00px;width:1.80px;height:408.00px;background:#b8bcc2;"></div>
<div style="left:1211.00px;top:1190.30px;width:1.80px;height:412.00px;background:#c0c4ca;"></div>
<div style="left:37.00px;top:1194.00px;width:1172.20px;height:137.40px;background:#f0f0f0;"></div>
<div style="left:0;top:1194px;width:1209px;height:405px;overflow:hidden">
<svg style="left:10.00px;top:4.00px" width="14" height="18" viewBox="0 0 14 18"><path d="M2 1.5 L10 8.6 L2 15.7" stroke="#909090" stroke-width="2.3" fill="none"/></svg>
<div class="t" style="left:41.50px;top:4.10px;font-family:'Liberation Mono';font-size:20.0px;letter-spacing:0.416px;color:#000;transform:scaleX(1.1);transform-origin:0 0;">Frame 8288: 128 bytes on wire (1024 bits), 128 bytes captured (1024 bits)</div>
<svg style="left:10.00px;top:31.50px" width="14" height="18" viewBox="0 0 14 18"><path d="M2 1.5 L10 8.6 L2 15.7" stroke="#909090" stroke-width="2.3" fill="none"/></svg>
<div class="t" style="left:41.50px;top:31.60px;font-family:'Liberation Mono';font-size:20.0px;letter-spacing:0.416px;color:#000;transform:scaleX(1.1);transform-origin:0 0;">Ethernet II, Src: Intel_78:4b:56 (00:1f:3c:78:4b:56), Dst: Cisco_ef:78:72 (00:01:c9:ef:78:72)</div>
<svg style="left:10.00px;top:59.00px" width="14" height="18" viewBox="0 0 14 18"><path d="M2 1.5 L10 8.6 L2 15.7" stroke="#909090" stroke-width="2.3" fill="none"/></svg>
<div class="t" style="left:41.50px;top:59.10px;font-family:'Liberation Mono';font-size:20.0px;letter-spacing:0.416px;color:#000;transform:scaleX(1.1);transform-origin:0 0;">Internet Protocol Version 4, Src: 172.16.1.128, Dst: 104.21.21.29</div>
<svg style="left:10.00px;top:86.50px" width="14" height="18" viewBox="0 0 14 18"><path d="M2 1.5 L10 8.6 L2 15.7" stroke="#909090" stroke-width="2.3" fill="none"/></svg>
<div class="t" style="left:41.50px;top:86.60px;font-family:'Liberation Mono';font-size:20.0px;letter-spacing:0.416px;color:#000;transform:scaleX(1.1);transform-origin:0 0;">Transmission Control Protocol, Src Port: 57956, Dst Port: 80, Seq: 1, Ack: 1, Len: 74</div>
<svg style="left:10.00px;top:114.00px" width="14" height="18" viewBox="0 0 14 18"><path d="M2 1.5 L10 8.6 L2 15.7" stroke="#909090" stroke-width="2.3" fill="none"/></svg>
<div class="t" style="left:41.50px;top:114.10px;font-family:'Liberation Mono';font-size:20.0px;letter-spacing:0.416px;color:#000;transform:scaleX(1.1);transform-origin:0 0;">Hypertext Transfer Protocol</div>
</div>
<div style="left:0.00px;top:1574.00px;width:1209.20px;height:24.00px;background:#f0f0f0;"></div>
<div style="left:30.00px;top:1574.00px;width:1053.00px;height:24.00px;background:#cdcdcd;"></div>
<svg style="left:6.00px;top:1579.00px" width="14" height="14" viewBox="0 0 14 14"><path d="M10 2 L4 7 L10 12" stroke="#606060" stroke-width="2.4" fill="none"/></svg>
<svg style="left:1187.00px;top:1579.00px" width="14" height="14" viewBox="0 0 14 14"><path d="M4 2 L10 7 L4 12" stroke="#606060" stroke-width="2.4" fill="none"/></svg>
<div style="left:0.00px;top:1599.60px;width:1212.60px;height:2.60px;background:#a0a4ac;"></div>
<div style="left:1212.60px;top:1183.50px;width:8.40px;height:420.00px;background:#f0f0f0;"></div>
<div style="left:1221.00px;top:1190.30px;width:1220.00px;height:1.80px;background:#b0b4bb;"></div>
<div style="left:1224.80px;top:1192.10px;width:1216.20px;height:1.90px;background:#cdd0d5;"></div>
<div style="left:1221.00px;top:1190.30px;width:2.00px;height:412.00px;background:#a4a8b0;"></div>
<div style="left:1223.00px;top:1192.00px;width:1.80px;height:408.00px;background:#cdd0d5;"></div>
<div style="left:1224.80px;top:1193.50px;width:1216.20px;height:406.00px;background:#ffffff;"></div>
<div style="left:1224.80px;top:1193.50px;width:80.20px;height:406.00px;background:#f0f0f0;"></div>
<div style="left:1221.00px;top:1599.60px;width:1220.00px;height:2.60px;background:#a0a4ac;"></div>
<div style="left:2437.50px;top:1190.50px;width:3.50px;height:412.00px;background:#b8bcc2;"></div>
<div class="t" style="left:1236.00px;top:1196.30px;font-family:'Liberation Mono';font-size:20.0px;letter-spacing:0.416px;color:#a8a8a8;transform:scaleX(1.1);transform-origin:0 0;">0000</div>
<div class="t" style="left:1317.96px;top:1196.30px;font-family:'Liberation Mono';font-size:20.0px;letter-spacing:0.416px;color:#000;transform:scaleX(1.1);transform-origin:0 0;">00 01 c9 ef 78 72 00 1f  3c 78 4b 56 08 00 45 00</div>
<div class="t" style="left:2014.62px;top:1196.30px;font-family:'Liberation Mono';font-size:20.0px;letter-spacing:0.416px;color:#000;transform:scaleX(1.1);transform-origin:0 0;"><span style="color:#a0a0a0;position:static">·</span><span style="color:#a0a0a0;position:static">·</span><span style="color:#a0a0a0;position:static">·</span><span style="color:#a0a0a0;position:static">·</span>xr<span style="color:#a0a0a0;position:static">·</span><span style="color:#a0a0a0;position:static">·</span> &lt;xKV<span style="color:#a0a0a0;position:static">·</span><span style="color:#a0a0a0;position:static">·</span>E<span style="color:#a0a0a0;position:static">·</span></div>
<div class="t" style="left:1236.00px;top:1220.73px;font-family:'Liberation Mono';font-size:20.0px;letter-spacing:0.416px;color:#a8a8a8;transform:scaleX(1.1);transform-origin:0 0;">0010</div>
<div class="t" style="left:1317.96px;top:1220.73px;font-family:'Liberation Mono';font-size:20.0px;letter-spacing:0.416px;color:#000;transform:scaleX(1.1);transform-origin:0 0;">00 72 88 34 40 00 80 06  47 8f ac 10 01 80 68 15</div>
<div class="t" style="left:2014.62px;top:1220.73px;font-family:'Liberation Mono';font-size:20.0px;letter-spacing:0.416px;color:#000;transform:scaleX(1.1);transform-origin:0 0;"><span style="color:#a0a0a0;position:static">·</span>r<span style="color:#a0a0a0;position:static">·</span>4@<span style="color:#a0a0a0;position:static">·</span><span style="color:#a0a0a0;position:static">·</span><span style="color:#a0a0a0;position:static">·</span> G<span style="color:#a0a0a0;position:static">·</span><span style="color:#a0a0a0;position:static">·</span><span style="color:#a0a0a0;position:static">·</span><span style="color:#a0a0a0;position:static">·</span><span style="color:#a0a0a0;position:static">·</span>h<span style="color:#a0a0a0;position:static">·</span></div>
<div class="t" style="left:1236.00px;top:1245.16px;font-family:'Liberation Mono';font-size:20.0px;letter-spacing:0.416px;color:#a8a8a8;transform:scaleX(1.1);transform-origin:0 0;">0020</div>
<div class="t" style="left:1317.96px;top:1245.16px;font-family:'Liberation Mono';font-size:20.0px;letter-spacing:0.416px;color:#000;transform:scaleX(1.1);transform-origin:0 0;">15 1d e2 64 00 50 e3 fa  b2 68 44 07 96 a1 50 18</div>
<div class="t" style="left:2014.62px;top:1245.16px;font-family:'Liberation Mono';font-size:20.0px;letter-spacing:0.416px;color:#000;transform:scaleX(1.1);transform-origin:0 0;"><span style="color:#a0a0a0;position:static">·</span><span style="color:#a0a0a0;position:static">·</span><span style="color:#a0a0a0;position:static">·</span>d<span style="color:#a0a0a0;position:static">·</span>P<span style="color:#a0a0a0;position:static">·</span><span style="color:#a0a0a0;position:static">·</span> <span style="color:#a0a0a0;position:static">·</span>hD<span style="color:#a0a0a0;position:static">·</span><span style="color:#a0a0a0;position:static">·</span><span style="color:#a0a0a0;position:static">·</span>P<span style="color:#a0a0a0;position:static">·</span></div>
<div class="t" style="left:1236.00px;top:1269.59px;font-family:'Liberation Mono';font-size:20.0px;letter-spacing:0.416px;color:#a8a8a8;transform:scaleX(1.1);transform-origin:0 0;">0030</div>
<div class="t" style="left:1317.96px;top:1269.59px;font-family:'Liberation Mono';font-size:20.0px;letter-spacing:0.416px;color:#000;transform:scaleX(1.1);transform-origin:0 0;">ff ff 2c a5 00 00 47 45  54 20 2f 73 68 72 6b 2e</div>
<div class="t" style="left:2014.62px;top:1269.59px;font-family:'Liberation Mono';font-size:20.0px;letter-spacing:0.416px;color:#000;transform:scaleX(1.1);transform-origin:0 0;"><span style="color:#a0a0a0;position:static">·</span><span style="color:#a0a0a0;position:static">·</span>,<span style="color:#a0a0a0;position:static">·</span><span style="color:#a0a0a0;position:static">·</span><span style="color:#a0a0a0;position:static">·</span>GE T /shrk.</div>
<div class="t" style="left:1236.00px;top:1294.02px;font-family:'Liberation Mono';font-size:20.0px;letter-spacing:0.416px;color:#a8a8a8;transform:scaleX(1.1);transform-origin:0 0;">0040</div>
<div class="t" style="left:1317.96px;top:1294.02px;font-family:'Liberation Mono';font-size:20.0px;letter-spacing:0.416px;color:#000;transform:scaleX(1.1);transform-origin:0 0;">62 69 6e 20 48 54 54 50  2f 31 2e 31 0d 0a 48 6f</div>
<div class="t" style="left:2014.62px;top:1294.02px;font-family:'Liberation Mono';font-size:20.0px;letter-spacing:0.416px;color:#000;transform:scaleX(1.1);transform-origin:0 0;">bin HTTP /1.1<span style="color:#a0a0a0;position:static">·</span><span style="color:#a0a0a0;position:static">·</span>Ho</div>
<div class="t" style="left:1236.00px;top:1318.45px;font-family:'Liberation Mono';font-size:20.0px;letter-spacing:0.416px;color:#a8a8a8;transform:scaleX(1.1);transform-origin:0 0;">0050</div>
<div class="t" style="left:1317.96px;top:1318.45px;font-family:'Liberation Mono';font-size:20.0px;letter-spacing:0.416px;color:#000;transform:scaleX(1.1);transform-origin:0 0;">73 74 3a 20 68 34 2e 63  68 61 74 74 65 72 73 63</div>
<div class="t" style="left:2014.62px;top:1318.45px;font-family:'Liberation Mono';font-size:20.0px;letter-spacing:0.416px;color:#000;transform:scaleX(1.1);transform-origin:0 0;">st: h4.c hattersc</div>
<div class="t" style="left:1236.00px;top:1342.88px;font-family:'Liberation Mono';font-size:20.0px;letter-spacing:0.416px;color:#a8a8a8;transform:scaleX(1.1);transform-origin:0 0;">0060</div>
<div class="t" style="left:1317.96px;top:1342.88px;font-family:'Liberation Mono';font-size:20.0px;letter-spacing:0.416px;color:#000;transform:scaleX(1.1);transform-origin:0 0;">61 6c 64 65 64 2e 74 6f  70 0d 0a 43 6f 6e 6e 65</div>
<div class="t" style="left:2014.62px;top:1342.88px;font-family:'Liberation Mono';font-size:20.0px;letter-spacing:0.416px;color:#000;transform:scaleX(1.1);transform-origin:0 0;">alded.to p<span style="color:#a0a0a0;position:static">·</span><span style="color:#a0a0a0;position:static">·</span>Conne</div>
<div class="t" style="left:1236.00px;top:1367.31px;font-family:'Liberation Mono';font-size:20.0px;letter-spacing:0.416px;color:#a8a8a8;transform:scaleX(1.1);transform-origin:0 0;">0070</div>
<div class="t" style="left:1317.96px;top:1367.31px;font-family:'Liberation Mono';font-size:20.0px;letter-spacing:0.416px;color:#000;transform:scaleX(1.1);transform-origin:0 0;">63 74 69 6f 6e 3a 20 63  6c 6f 73 65 0d 0a 0d 0a</div>
<div class="t" style="left:2014.62px;top:1367.31px;font-family:'Liberation Mono';font-size:20.0px;letter-spacing:0.416px;color:#000;transform:scaleX(1.1);transform-origin:0 0;">ction: c lose<span style="color:#a0a0a0;position:static">·</span><span style="color:#a0a0a0;position:static">·</span><span style="color:#a0a0a0;position:static">·</span><span style="color:#a0a0a0;position:static">·</span></div>
<div class="t" style="left:1919.00px;top:1490.80px;font-family:'Liberation Sans';font-size:32px;letter-spacing:1.557px;color:#c8c8c8;transform:scaleX(1.1019);transform-origin:0 0;-webkit-text-stroke:0">Activate Windows</div>
<div class="t" style="left:1918.50px;top:1531.12px;font-family:'Liberation Sans';font-size:25.5px;letter-spacing:0.776px;color:#c8c8c8;transform:scaleX(1.0701);transform-origin:0 0;-webkit-text-stroke:0">Go to Settings to activate Windows.</div>
<div style="left:0.00px;top:1602.20px;width:2441.00px;height:33.00px;background:#f0f0f0;"></div>
<svg style="left:13.00px;top:1606.00px" width="32" height="28" viewBox="0 0 32 28"><ellipse cx="15" cy="13.5" rx="13" ry="11.5" fill="#e2de6c" stroke="#a8a448" stroke-width="2"/></svg>
<svg style="left:59.00px;top:1607.00px" width="29" height="24" viewBox="0 0 29 24"><rect x="1" y="4" width="22" height="18" fill="#e8e8e8" stroke="#c8c8c8"/><rect x="1" y="1" width="14" height="6" fill="#3a9ae0"/><path d="M8 19 L24 3" stroke="#404040" stroke-width="3.5"/></svg>
<div class="t" style="left:118.00px;top:1612.30px;font-family:'Liberation Sans';font-size:20px;letter-spacing:0.859px;color:#000;transform:scaleX(1.1002);transform-origin:0 0;">2025-06-20-traffic-from-running-the-malware.pcap</div>
<div style="left:1548.50px;top:1606.00px;width:2.20px;height:29.00px;background:#a4a4a4;"></div>
<div style="left:1557.50px;top:1606.00px;width:2.20px;height:29.00px;background:#a4a4a4;"></div>
<div class="t" style="left:1581.00px;top:1612.40px;font-family:'Liberation Sans';font-size:20px;letter-spacing:0.357px;color:#000;transform:scaleX(1.0391);transform-origin:0 0;">Packets: 76843 · Displayed: 28 (0.0%)</div>
<div style="left:2213.50px;top:1606.00px;width:2.20px;height:29.00px;background:#a4a4a4;"></div>
<div style="left:2222.50px;top:1606.00px;width:2.20px;height:29.00px;background:#a4a4a4;"></div>
<div class="t" style="left:2246.60px;top:1612.40px;font-family:'Liberation Sans';font-size:20px;letter-spacing:0.597px;color:#000;transform:scaleX(1.0733);transform-origin:0 0;">Profile: Default</div>
<div style="left:2405.50px;top:1606.00px;width:1.00px;height:29.00px;background:#c8c8c8;"></div>
<svg style="left:2420.00px;top:1618.00px" width="16" height="14" viewBox="0 0 16 14"><g fill="#a0a0a0"><rect x="12" y="0" width="2" height="2"/><rect x="12" y="5" width="2" height="2"/><rect x="12" y="10" width="2" height="2"/><rect x="7" y="5" width="2" height="2"/><rect x="7" y="10" width="2" height="2"/><rect x="2" y="10" width="2" height="2"/></g></svg>
</body></html>
